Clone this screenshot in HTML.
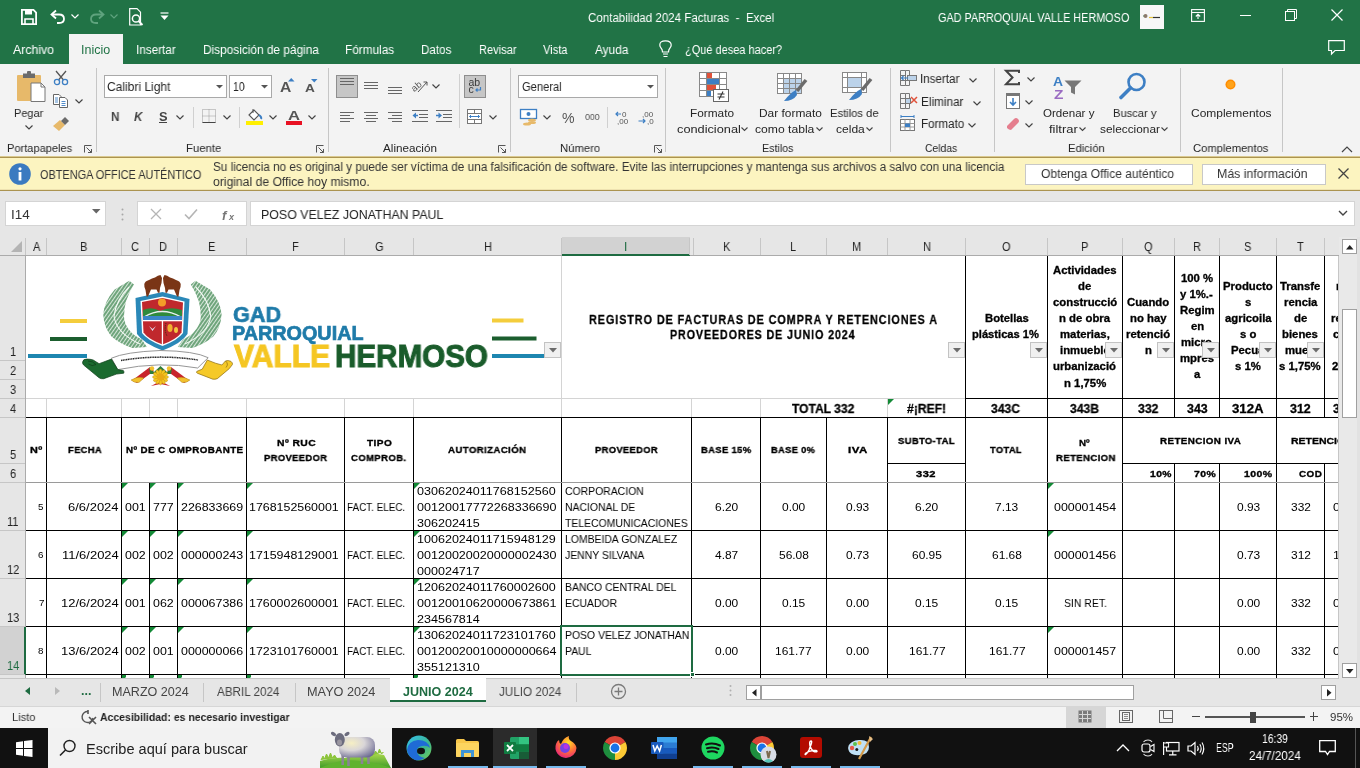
<!DOCTYPE html>
<html><head><meta charset="utf-8">
<style>
*{margin:0;padding:0;box-sizing:border-box}
html,body{width:1360px;height:768px;overflow:hidden;background:#fff;font-family:"Liberation Sans",sans-serif;position:relative}
.a{position:absolute}
.t{position:absolute;white-space:pre;line-height:1;transform-origin:0 0;will-change:transform}
svg{position:absolute;overflow:visible}

</style></head><body>
<div class="a" style="left:0px;top:0px;width:1360px;height:64px;background:#217346"></div>
<div class="a" style="left:0px;top:64px;width:1360px;height:93px;background:#f3f3f3"></div>
<div class="t" style="left:587.60px;top:12.38px;font-size:12.5px;color:#fff;transform:scaleX(0.9237);">Contabilidad 2024 Facturas  -  Excel</div>
<div class="t" style="left:938.00px;top:12.38px;font-size:12.5px;color:#fff;transform:scaleX(0.8672);">GAD PARROQUIAL VALLE HERMOSO</div>
<div class="a" style="left:69px;top:34px;width:54px;height:30px;background:#f3f3f3"></div>
<div class="t" style="left:13.00px;top:44.38px;font-size:12.5px;color:#fff;transform:scaleX(0.9825);">Archivo</div>
<div class="t" style="left:80.51px;top:44.38px;font-size:12.5px;color:#217346;transform:scaleX(0.9883);">Inicio</div>
<div class="t" style="left:136.46px;top:44.38px;font-size:12.5px;color:#fff;transform:scaleX(0.9366);">Insertar</div>
<div class="t" style="left:202.55px;top:44.38px;font-size:12.5px;color:#fff;transform:scaleX(0.9477);">Disposición de página</div>
<div class="t" style="left:345.06px;top:44.38px;font-size:12.5px;color:#fff;transform:scaleX(0.9441);">Fórmulas</div>
<div class="t" style="left:421.47px;top:44.38px;font-size:12.5px;color:#fff;transform:scaleX(0.9266);">Datos</div>
<div class="t" style="left:478.51px;top:44.38px;font-size:12.5px;color:#fff;transform:scaleX(0.8858);">Revisar</div>
<div class="t" style="left:543.00px;top:44.38px;font-size:12.5px;color:#fff;transform:scaleX(0.8909);">Vista</div>
<div class="t" style="left:595.00px;top:44.38px;font-size:12.5px;color:#fff;transform:scaleX(0.9499);">Ayuda</div>
<div class="t" style="left:685.30px;top:44.38px;font-size:12.5px;color:#fff;transform:scaleX(0.8785);">¿Qué desea hacer?</div>
<div class="t" style="left:6.60px;top:143.22px;font-size:11.5px;color:#262626;transform:scaleX(0.9615);">Portapapeles</div>
<div class="t" style="left:185.60px;top:143.22px;font-size:11.5px;color:#262626;transform:scaleX(0.9857);">Fuente</div>
<div class="t" style="left:383.00px;top:143.22px;font-size:11.5px;color:#262626;transform:scaleX(1.0158);">Alineación</div>
<div class="t" style="left:559.50px;top:143.22px;font-size:11.5px;color:#262626;transform:scaleX(0.9826);">Número</div>
<div class="t" style="left:761.50px;top:143.22px;font-size:11.5px;color:#262626;transform:scaleX(0.9290);">Estilos</div>
<div class="t" style="left:924.80px;top:143.22px;font-size:11.5px;color:#262626;transform:scaleX(0.8988);">Celdas</div>
<div class="t" style="left:1067.60px;top:143.22px;font-size:11.5px;color:#262626;transform:scaleX(0.9753);">Edición</div>
<div class="t" style="left:1192.60px;top:143.22px;font-size:11.5px;color:#262626;transform:scaleX(0.9757);">Complementos</div>
<div class="a" style="left:96px;top:68px;width:1px;height:84px;background:#c6c6c6"></div>
<div class="a" style="left:328px;top:68px;width:1px;height:84px;background:#c6c6c6"></div>
<div class="a" style="left:510px;top:68px;width:1px;height:84px;background:#c6c6c6"></div>
<div class="a" style="left:665px;top:68px;width:1px;height:84px;background:#c6c6c6"></div>
<div class="a" style="left:890px;top:68px;width:1px;height:84px;background:#c6c6c6"></div>
<div class="a" style="left:994px;top:68px;width:1px;height:84px;background:#c6c6c6"></div>
<div class="a" style="left:1180px;top:68px;width:1px;height:84px;background:#c6c6c6"></div>
<div class="a" style="left:1282px;top:68px;width:1px;height:84px;background:#c6c6c6"></div>
<div class="a" style="left:0px;top:156px;width:1360px;height:35px;background:#fcf4c0;border-top:1px solid #d9c98f;border-bottom:1px solid #ddd0a0"></div>
<div class="a" style="left:0px;top:157px;width:1360px;height:1px;background:#ab9350"></div>
<div class="a" style="left:0px;top:190px;width:1360px;height:1px;background:#ab9350"></div>
<div class="a" style="left:0px;top:189px;width:1360px;height:1px;background:#eee2b0"></div>
<div class="a" style="left:0px;top:191px;width:1360px;height:46px;background:#e6e6e6"></div>
<div class="a" style="left:0px;top:237px;width:1339px;height:19px;background:#e6e6e6"></div>
<div class="a" style="left:0px;top:255px;width:1339px;height:1px;background:#ababab"></div>
<div class="a" style="left:562px;top:237px;width:128px;height:18px;background:#d2d2d2"></div>
<div class="a" style="left:562px;top:254px;width:128px;height:2px;background:#1e6b41"></div>
<div class="a" style="left:0px;top:256px;width:25px;height:422px;background:#e6e6e6"></div>
<div class="a" style="left:25px;top:256px;width:1px;height:422px;background:#ababab"></div>
<div class="a" style="left:0px;top:627px;width:25px;height:48px;background:#d2d2d2"></div>
<div class="a" style="left:24px;top:627px;width:2px;height:48px;background:#1e6b41"></div>
<div class="a" style="left:46px;top:238px;width:1px;height:17px;background:#c6c6c6"></div>
<div class="a" style="left:121px;top:238px;width:1px;height:17px;background:#c6c6c6"></div>
<div class="a" style="left:149px;top:238px;width:1px;height:17px;background:#c6c6c6"></div>
<div class="a" style="left:177px;top:238px;width:1px;height:17px;background:#c6c6c6"></div>
<div class="a" style="left:246px;top:238px;width:1px;height:17px;background:#c6c6c6"></div>
<div class="a" style="left:344px;top:238px;width:1px;height:17px;background:#c6c6c6"></div>
<div class="a" style="left:413px;top:238px;width:1px;height:17px;background:#c6c6c6"></div>
<div class="a" style="left:561px;top:238px;width:1px;height:17px;background:#c6c6c6"></div>
<div class="a" style="left:689px;top:238px;width:1px;height:17px;background:#c6c6c6"></div>
<div class="a" style="left:693px;top:238px;width:1px;height:17px;background:#c6c6c6"></div>
<div class="a" style="left:760px;top:238px;width:1px;height:17px;background:#c6c6c6"></div>
<div class="a" style="left:826px;top:238px;width:1px;height:17px;background:#c6c6c6"></div>
<div class="a" style="left:887px;top:238px;width:1px;height:17px;background:#c6c6c6"></div>
<div class="a" style="left:965px;top:238px;width:1px;height:17px;background:#c6c6c6"></div>
<div class="a" style="left:1047px;top:238px;width:1px;height:17px;background:#c6c6c6"></div>
<div class="a" style="left:1122px;top:238px;width:1px;height:17px;background:#c6c6c6"></div>
<div class="a" style="left:1174px;top:238px;width:1px;height:17px;background:#c6c6c6"></div>
<div class="a" style="left:1219px;top:238px;width:1px;height:17px;background:#c6c6c6"></div>
<div class="a" style="left:1276px;top:238px;width:1px;height:17px;background:#c6c6c6"></div>
<div class="a" style="left:1324px;top:238px;width:1px;height:17px;background:#c6c6c6"></div>
<div class="a" style="left:25px;top:238px;width:1px;height:17px;background:#c6c6c6"></div>
<svg style="left:11px;top:241px" width="12" height="12"><path d="M11 0 L11 11 L0 11 Z" fill="#b4b4b4"/></svg>
<div class="t" style="left:32.82px;top:240.80px;font-size:12px;color:#222;transform:scaleX(0.9200);">A</div>
<div class="t" style="left:80.32px;top:240.80px;font-size:12px;color:#222;transform:scaleX(0.9200);">B</div>
<div class="t" style="left:131.36px;top:240.80px;font-size:12px;color:#222;transform:scaleX(0.9200);">C</div>
<div class="t" style="left:159.36px;top:240.80px;font-size:12px;color:#222;transform:scaleX(0.9200);">D</div>
<div class="t" style="left:208.32px;top:240.80px;font-size:12px;color:#222;transform:scaleX(0.9200);">E</div>
<div class="t" style="left:292.28px;top:240.80px;font-size:12px;color:#222;transform:scaleX(0.9200);">F</div>
<div class="t" style="left:374.86px;top:240.80px;font-size:12px;color:#222;transform:scaleX(0.9200);">G</div>
<div class="t" style="left:483.82px;top:240.80px;font-size:12px;color:#222;transform:scaleX(0.9200);">H</div>
<div class="t" style="left:623.66px;top:240.80px;font-size:12px;color:#1e6b41;transform:scaleX(0.9200);">I</div>
<div class="t" style="left:723.32px;top:240.80px;font-size:12px;color:#222;transform:scaleX(0.9200);">K</div>
<div class="t" style="left:790.28px;top:240.80px;font-size:12px;color:#222;transform:scaleX(0.9200);">L</div>
<div class="t" style="left:852.40px;top:240.80px;font-size:12px;color:#222;transform:scaleX(0.9200);">M</div>
<div class="t" style="left:922.82px;top:240.80px;font-size:12px;color:#222;transform:scaleX(0.9200);">N</div>
<div class="t" style="left:1002.36px;top:240.80px;font-size:12px;color:#222;transform:scaleX(0.9200);">O</div>
<div class="t" style="left:1081.32px;top:240.80px;font-size:12px;color:#222;transform:scaleX(0.9200);">P</div>
<div class="t" style="left:1144.36px;top:240.80px;font-size:12px;color:#222;transform:scaleX(0.9200);">Q</div>
<div class="t" style="left:1192.86px;top:240.80px;font-size:12px;color:#222;transform:scaleX(0.9200);">R</div>
<div class="t" style="left:1244.32px;top:240.80px;font-size:12px;color:#222;transform:scaleX(0.9200);">S</div>
<div class="t" style="left:1296.82px;top:240.80px;font-size:12px;color:#222;transform:scaleX(0.9200);">T</div>
<div class="a" style="left:0px;top:360px;width:25px;height:1px;background:#c6c6c6"></div>
<div class="t" style="left:9.78px;top:345.80px;font-size:12px;color:#222;transform:scaleX(0.9200);">1</div>
<div class="a" style="left:0px;top:379px;width:25px;height:1px;background:#c6c6c6"></div>
<div class="t" style="left:9.78px;top:364.80px;font-size:12px;color:#222;transform:scaleX(0.9200);">2</div>
<div class="a" style="left:0px;top:398px;width:25px;height:1px;background:#c6c6c6"></div>
<div class="t" style="left:9.78px;top:383.80px;font-size:12px;color:#222;transform:scaleX(0.9200);">3</div>
<div class="a" style="left:0px;top:417px;width:25px;height:1px;background:#c6c6c6"></div>
<div class="t" style="left:9.78px;top:402.80px;font-size:12px;color:#222;transform:scaleX(0.9200);">4</div>
<div class="a" style="left:0px;top:463px;width:25px;height:1px;background:#c6c6c6"></div>
<div class="t" style="left:9.78px;top:448.80px;font-size:12px;color:#222;transform:scaleX(0.9200);">5</div>
<div class="a" style="left:0px;top:482px;width:25px;height:1px;background:#c6c6c6"></div>
<div class="t" style="left:9.78px;top:467.80px;font-size:12px;color:#222;transform:scaleX(0.9200);">6</div>
<div class="a" style="left:0px;top:530px;width:25px;height:1px;background:#c6c6c6"></div>
<div class="t" style="left:7.12px;top:515.80px;font-size:12px;color:#222;transform:scaleX(0.9200);">11</div>
<div class="a" style="left:0px;top:578px;width:25px;height:1px;background:#c6c6c6"></div>
<div class="t" style="left:6.71px;top:563.80px;font-size:12px;color:#222;transform:scaleX(0.9200);">12</div>
<div class="a" style="left:0px;top:626px;width:25px;height:1px;background:#c6c6c6"></div>
<div class="t" style="left:6.71px;top:611.80px;font-size:12px;color:#222;transform:scaleX(0.9200);">13</div>
<div class="a" style="left:0px;top:674px;width:25px;height:1px;background:#c6c6c6"></div>
<div class="t" style="left:6.71px;top:659.80px;font-size:12px;color:#1e6b41;transform:scaleX(0.9200);">14</div>
<div class="a" style="left:561px;top:256px;width:1px;height:143px;background:#d4d4d4"></div>
<div class="a" style="left:26px;top:398px;width:940px;height:1px;background:#d4d4d4"></div>
<div class="a" style="left:46px;top:398px;width:1px;height:20px;background:#d4d4d4"></div>
<div class="a" style="left:121px;top:398px;width:1px;height:20px;background:#d4d4d4"></div>
<div class="a" style="left:149px;top:398px;width:1px;height:20px;background:#d4d4d4"></div>
<div class="a" style="left:177px;top:398px;width:1px;height:20px;background:#d4d4d4"></div>
<div class="a" style="left:246px;top:398px;width:1px;height:20px;background:#d4d4d4"></div>
<div class="a" style="left:344px;top:398px;width:1px;height:20px;background:#d4d4d4"></div>
<div class="a" style="left:413px;top:398px;width:1px;height:20px;background:#d4d4d4"></div>
<div class="a" style="left:561px;top:398px;width:1px;height:20px;background:#d4d4d4"></div>
<div class="a" style="left:691px;top:398px;width:1px;height:20px;background:#d4d4d4"></div>
<div class="a" style="left:760px;top:398px;width:1px;height:20px;background:#d4d4d4"></div>
<div class="a" style="left:887px;top:398px;width:1px;height:20px;background:#d4d4d4"></div>
<div class="a" style="left:965px;top:398px;width:374px;height:1px;background:#000"></div>
<div class="a" style="left:26px;top:417px;width:1313px;height:1px;background:#000"></div>
<div class="a" style="left:46px;top:417px;width:1px;height:66px;background:#000"></div>
<div class="a" style="left:121px;top:417px;width:1px;height:66px;background:#000"></div>
<div class="a" style="left:246px;top:417px;width:1px;height:66px;background:#000"></div>
<div class="a" style="left:344px;top:417px;width:1px;height:66px;background:#000"></div>
<div class="a" style="left:413px;top:417px;width:1px;height:66px;background:#000"></div>
<div class="a" style="left:561px;top:417px;width:1px;height:66px;background:#000"></div>
<div class="a" style="left:691px;top:417px;width:1px;height:66px;background:#000"></div>
<div class="a" style="left:760px;top:417px;width:1px;height:66px;background:#000"></div>
<div class="a" style="left:826px;top:417px;width:1px;height:66px;background:#000"></div>
<div class="a" style="left:887px;top:417px;width:1px;height:66px;background:#000"></div>
<div class="a" style="left:965px;top:256px;width:1px;height:422px;background:#000"></div>
<div class="a" style="left:1047px;top:256px;width:1px;height:422px;background:#000"></div>
<div class="a" style="left:1122px;top:256px;width:1px;height:422px;background:#000"></div>
<div class="a" style="left:1276px;top:256px;width:1px;height:422px;background:#000"></div>
<div class="a" style="left:1174px;top:256px;width:1px;height:162px;background:#000"></div>
<div class="a" style="left:1174px;top:463px;width:1px;height:215px;background:#000"></div>
<div class="a" style="left:1219px;top:256px;width:1px;height:162px;background:#000"></div>
<div class="a" style="left:1219px;top:463px;width:1px;height:215px;background:#000"></div>
<div class="a" style="left:1324px;top:256px;width:1px;height:162px;background:#000"></div>
<div class="a" style="left:1324px;top:463px;width:1px;height:215px;background:#000"></div>
<div class="a" style="left:887px;top:463px;width:79px;height:1px;background:#000"></div>
<div class="a" style="left:1122px;top:463px;width:217px;height:1px;background:#000"></div>
<div class="a" style="left:26px;top:482px;width:1313px;height:1px;background:#9a9a9a"></div>
<div class="a" style="left:26px;top:530px;width:1313px;height:1px;background:#000"></div>
<div class="a" style="left:26px;top:578px;width:1313px;height:1px;background:#000"></div>
<div class="a" style="left:26px;top:626px;width:1313px;height:1px;background:#000"></div>
<div class="a" style="left:26px;top:674px;width:1313px;height:1px;background:#000"></div>
<div class="a" style="left:46px;top:483px;width:1px;height:195px;background:#000"></div>
<div class="a" style="left:121px;top:483px;width:1px;height:195px;background:#000"></div>
<div class="a" style="left:149px;top:483px;width:1px;height:195px;background:#000"></div>
<div class="a" style="left:177px;top:483px;width:1px;height:195px;background:#000"></div>
<div class="a" style="left:246px;top:483px;width:1px;height:195px;background:#000"></div>
<div class="a" style="left:344px;top:483px;width:1px;height:195px;background:#000"></div>
<div class="a" style="left:413px;top:483px;width:1px;height:195px;background:#000"></div>
<div class="a" style="left:561px;top:483px;width:1px;height:195px;background:#000"></div>
<div class="a" style="left:691px;top:483px;width:1px;height:195px;background:#000"></div>
<div class="a" style="left:760px;top:483px;width:1px;height:195px;background:#000"></div>
<div class="a" style="left:826px;top:483px;width:1px;height:195px;background:#000"></div>
<div class="a" style="left:887px;top:483px;width:1px;height:195px;background:#000"></div>
<div class="a" style="left:1338px;top:256px;width:1px;height:422px;background:#c6c6c6"></div>
<div class="a" style="left:1339px;top:237px;width:21px;height:441px;background:#e9e9e9"></div>
<div class="a" style="left:1357px;top:237px;width:3px;height:441px;background:#e2e2e2"></div>
<div class="a" style="left:1342px;top:239px;width:15px;height:15px;background:#fff;border:1px solid #a0a0a0"><svg style="left:3px;top:5px" width="8" height="5"><path d="M0 4.5H7.5L3.75 0Z" fill="#222"/></svg></div>
<div class="a" style="left:1342px;top:309px;width:15px;height:109px;background:#fff;border:1px solid #a0a0a0"></div>
<div class="a" style="left:1342px;top:663px;width:15px;height:15px;background:#fff;border:1px solid #a0a0a0"><svg style="left:3px;top:5px" width="8" height="5"><path d="M0 0H7.5L3.75 4.5Z" fill="#222"/></svg></div>
<svg style="left:17px;top:71px" width="30" height="32" viewBox="0 0 30 32">
<rect x="0" y="4" width="24" height="26" rx="1" fill="#e7b96a"/>
<path d="M6 2.5 H18 V7 H6Z" fill="#6b6b6b"/><rect x="10" y="0" width="4" height="3.5" rx="1" fill="#6b6b6b"/>
<path d="M14 12 H24 L28 16 V30.5 H14Z" fill="#fff" stroke="#777" stroke-width="1"/>
<path d="M24 12 V16 H28" fill="none" stroke="#777" stroke-width="1"/>
</svg>
<div class="t" style="left:14.40px;top:108.22px;font-size:11.5px;color:#262626;transform:scaleX(0.9528);">Pegar</div>
<svg style="left:25px;top:125px" width="8" height="5"><path d="M0.5 0.5L4 4L7.5 0.5" stroke="#444" stroke-width="1.2" fill="none"/></svg>
<svg style="left:53px;top:70px" width="16" height="15"><path d="M3 1L10.5 10M13 1L5.5 10" stroke="#555" stroke-width="1.3"/><circle cx="4" cy="12" r="2.6" fill="none" stroke="#3d7fc4" stroke-width="1.3"/><circle cx="12" cy="12" r="2.6" fill="none" stroke="#3d7fc4" stroke-width="1.3"/></svg>
<svg style="left:53px;top:94px" width="16" height="14"><path d="M0.5 0.5H6L8 2.5V10.5H0.5Z" fill="#fff" stroke="#666"/><path d="M6.5 3.5H12L14.5 6V13.5H6.5Z" fill="#fff" stroke="#666"/><path d="M8.5 7.5H12.5M8.5 9.5H12.5M8.5 11.5H12.5M2 4H5M2 6H5M2 8H5" stroke="#3d7fc4" stroke-width="0.9"/></svg>
<svg style="left:75px;top:99px" width="8" height="5"><path d="M0.5 0.5L4 4L7.5 0.5" stroke="#444" stroke-width="1.2" fill="none"/></svg>
<svg style="left:53px;top:117px" width="16" height="14"><path d="M0 9 L7 3 L12 8 L6 14Z" fill="#e7b96a"/><path d="M8 4 L12 0 L16 4 L12 8Z" fill="#6b6b6b"/></svg>
<svg style="left:84px;top:145px" width="9" height="8"><path d="M0.5 7.5V0.5H7.5" stroke="#555" fill="none"/><path d="M2.5 2.5L7.5 7.5M4 7.5H7.5V4" stroke="#555" fill="none"/></svg>
<div class="a" style="left:104px;top:75px;width:123px;height:23px;background:#fff;border:1px solid #a9a9a9"></div>
<div class="t" style="left:107.40px;top:81.38px;font-size:12.5px;color:#262626;transform:scaleX(0.9605);">Calibri Light</div>
<svg style="left:216px;top:85px" width="8" height="4"><path d="M0 0H7L3.5 3.5Z" fill="#555"/></svg>
<div class="a" style="left:229px;top:75px;width:43px;height:23px;background:#fff;border:1px solid #a9a9a9"></div>
<div class="t" style="left:232.70px;top:81.38px;font-size:12.5px;color:#262626;transform:scaleX(0.8314);">10</div>
<svg style="left:261px;top:85px" width="8" height="4"><path d="M0 0H7L3.5 3.5Z" fill="#555"/></svg>
<div class="t" style="left:280.30px;top:80.10px;font-size:14px;color:#555;font-weight:bold;transform:scaleX(1.1200);">A</div>
<svg style="left:288px;top:78px" width="7" height="4"><path d="M0 3.5H6.5L3.25 0Z" fill="#3d7fc4"/></svg>
<div class="t" style="left:305.00px;top:83.22px;font-size:11.5px;color:#555;font-weight:bold;transform:scaleX(1.1875);">A</div>
<svg style="left:311px;top:79px" width="7" height="4"><path d="M0 0H6.5L3.25 3.5Z" fill="#3d7fc4"/></svg>
<div class="t" style="left:110.60px;top:111.38px;font-size:12.5px;color:#444;font-weight:bold;transform:scaleX(0.9333);">N</div>
<div class="t" style="left:134.00px;top:111.38px;font-size:12.5px;color:#444;font-weight:bold;transform:scaleX(0.9333);font-style:italic;">K</div>
<div class="t" style="left:158.80px;top:111.38px;font-size:12.5px;color:#444;font-weight:bold;transform:scaleX(1.0250);">S</div>
<div class="a" style="left:159px;top:122px;width:8px;height:1px;background:#444"></div>
<svg style="left:176px;top:115px" width="8" height="5"><path d="M0.5 0.5L4 4L7.5 0.5" stroke="#444" stroke-width="1.2" fill="none"/></svg>
<div class="a" style="left:193px;top:107px;width:1px;height:21px;background:#d0d0d0"></div>
<svg style="left:202px;top:109px" width="14" height="14"><rect x="0.5" y="0.5" width="13" height="13" fill="none" stroke="#999" stroke-dasharray="1 1"/><path d="M7 0.5V13.5M0.5 7H13.5" stroke="#999" stroke-dasharray="1 1"/><path d="M0.5 13.5H13.5" stroke="#444"/></svg>
<svg style="left:223px;top:115px" width="8" height="5"><path d="M0.5 0.5L4 4L7.5 0.5" stroke="#444" stroke-width="1.2" fill="none"/></svg>
<div class="a" style="left:239px;top:107px;width:1px;height:21px;background:#d0d0d0"></div>
<svg style="left:246px;top:108px" width="18" height="18"><path d="M3 7 L8 2 L13 7 L8 12Z" fill="#fff" stroke="#555" stroke-width="1.1"/><path d="M7 1V5" stroke="#555"/><path d="M13 7 Q16 9 15 11" stroke="#3d7fc4" stroke-width="2" fill="none"/><rect x="0" y="13" width="17" height="4" fill="#ffef00"/></svg>
<svg style="left:269px;top:115px" width="8" height="5"><path d="M0.5 0.5L4 4L7.5 0.5" stroke="#444" stroke-width="1.2" fill="none"/></svg>
<div class="t" style="left:288.00px;top:110.38px;font-size:12.5px;color:#555;font-weight:bold;transform:scaleX(1.3333);">A</div>
<div class="a" style="left:286px;top:121px;width:16px;height:4px;background:#e81123"></div>
<svg style="left:308px;top:115px" width="8" height="5"><path d="M0.5 0.5L4 4L7.5 0.5" stroke="#444" stroke-width="1.2" fill="none"/></svg>
<svg style="left:316px;top:145px" width="9" height="8"><path d="M0.5 7.5V0.5H7.5" stroke="#555" fill="none"/><path d="M2.5 2.5L7.5 7.5M4 7.5H7.5V4" stroke="#555" fill="none"/></svg>
<div class="a" style="left:336px;top:75px;width:22px;height:23px;background:#c6c6c6;border:1px solid #8e8e8e"></div>
<svg style="left:340px;top:78px" width="14" height="8"><path d="M0 0.5H14M0 3.5H14M0 6.5H14" stroke="#666" stroke-width="1"/></svg>
<svg style="left:364px;top:82px" width="14" height="8"><path d="M0 0.5H14M0 3.5H14M0 6.5H14" stroke="#666" stroke-width="1"/></svg>
<svg style="left:388px;top:87px" width="14" height="8"><path d="M0 0.5H14M0 3.5H14M0 6.5H14" stroke="#666" stroke-width="1"/></svg>
<svg style="left:411px;top:78px" width="18" height="15"><text x="0" y="11" font-family="Liberation Sans" font-size="9.5" fill="#555" transform="rotate(-40 6 8)">ab</text><path d="M7 14L16 4M16 4H12.5M16 4V7.5" stroke="#555" stroke-width="1" fill="none"/></svg>
<svg style="left:432px;top:84px" width="8" height="5"><path d="M0.5 0.5L4 4L7.5 0.5" stroke="#444" stroke-width="1.2" fill="none"/></svg>
<svg style="left:340px;top:112px" width="14" height="10"><path d="M0 0.5H14M0 3.5H10M0 6.5H14M0 9.5H10" stroke="#666" stroke-width="1"/></svg>
<svg style="left:364px;top:112px" width="14" height="10"><path d="M0 0.5H14M2 3.5H12M0 6.5H14M2 9.5H12" stroke="#666" stroke-width="1"/></svg>
<svg style="left:388px;top:112px" width="14" height="10"><path d="M0 0.5H14M4 3.5H14M0 6.5H14M4 9.5H14" stroke="#666" stroke-width="1"/></svg>
<svg style="left:412px;top:110px" width="17" height="13"><path d="M0 0.5H16M7 4.5H16M7 7.5H16M0 11.5H16" stroke="#666" stroke-width="1"/><path d="M0.5 5.5L4 2.5V8.5Z" fill="#3d7fc4"/><path d="M3 5.5H6" stroke="#3d7fc4" stroke-width="1.5"/></svg>
<svg style="left:436px;top:110px" width="17" height="13"><path d="M0 0.5H16M7 4.5H16M7 7.5H16M0 11.5H16" stroke="#666" stroke-width="1"/><path d="M6 5.5L2.5 2.5V8.5Z" fill="#3d7fc4"/><path d="M0 5.5H3" stroke="#3d7fc4" stroke-width="1.5"/></svg>
<div class="a" style="left:459px;top:74px;width:1px;height:54px;background:#d0d0d0"></div>
<div class="a" style="left:464px;top:75px;width:22px;height:23px;background:#c6c6c6;border:1px solid #8e8e8e"></div>
<svg style="left:467px;top:77px" width="17" height="18"><text x="1.5" y="8.5" font-family="Liberation Sans" font-size="10.5" fill="#3a3a3a">ab</text><text x="1.5" y="16" font-family="Liberation Sans" font-size="10.5" fill="#3a3a3a">c</text><path d="M13.5 10V13H9M10.5 11.5L9 13L10.5 14.5" stroke="#3d7fc4" stroke-width="1.2" fill="none"/></svg>
<svg style="left:467px;top:109px" width="15" height="15"><rect x="0.5" y="0.5" width="14" height="14" fill="#fff" stroke="#777"/><path d="M0.5 4.5H14.5M0.5 10.5H14.5M7.5 0.5V4.5M7.5 10.5V14.5" stroke="#777"/><path d="M2.5 7.5H12.5M4 6L2.5 7.5L4 9M11 6L12.5 7.5L11 9" stroke="#3d7fc4" fill="none"/></svg>
<svg style="left:489px;top:115px" width="8" height="5"><path d="M0.5 0.5L4 4L7.5 0.5" stroke="#444" stroke-width="1.2" fill="none"/></svg>
<svg style="left:498px;top:145px" width="9" height="8"><path d="M0.5 7.5V0.5H7.5" stroke="#555" fill="none"/><path d="M2.5 2.5L7.5 7.5M4 7.5H7.5V4" stroke="#555" fill="none"/></svg>
<div class="a" style="left:518px;top:75px;width:140px;height:23px;background:#fff;border:1px solid #a9a9a9"></div>
<div class="t" style="left:521.50px;top:80.80px;font-size:12px;color:#262626;transform:scaleX(0.9304);">General</div>
<svg style="left:647px;top:85px" width="8" height="4"><path d="M0 0H7L3.5 3.5Z" fill="#555"/></svg>
<svg style="left:520px;top:109px" width="18" height="17"><rect x="0.5" y="0.5" width="16" height="9" fill="#fff" stroke="#3d7fc4" stroke-width="1.3"/><circle cx="8.5" cy="5" r="2" fill="#3d7fc4"/><ellipse cx="12" cy="11" rx="4" ry="1.6" fill="#e7b96a"/><ellipse cx="12" cy="13.5" rx="4" ry="1.6" fill="#e7b96a"/><ellipse cx="7" cy="15" rx="4" ry="1.6" fill="#e7b96a"/></svg>
<svg style="left:543px;top:115px" width="8" height="5"><path d="M0.5 0.5L4 4L7.5 0.5" stroke="#444" stroke-width="1.2" fill="none"/></svg>
<div class="t" style="left:562.30px;top:111.10px;font-size:14px;color:#555;transform:scaleX(1.0083);">%</div>
<div class="t" style="left:584.60px;top:111.92px;font-size:9.5px;color:#555;transform:scaleX(0.9250);">000</div>
<div class="a" style="left:607px;top:107px;width:1px;height:21px;background:#d0d0d0"></div>
<svg style="left:615px;top:110px" width="15" height="14"><text x="7" y="7" font-family="Liberation Sans" font-size="8" fill="#555">0</text><text x="2" y="13.5" font-family="Liberation Sans" font-size="8" fill="#555">,00</text><path d="M1 4H6M3 2L1 4L3 6" stroke="#3d7fc4" stroke-width="1.2" fill="none"/></svg>
<svg style="left:638px;top:110px" width="16" height="14"><text x="4" y="7" font-family="Liberation Sans" font-size="8" fill="#555">,00</text><text x="9" y="13.5" font-family="Liberation Sans" font-size="8" fill="#555">,0</text><path d="M0.5 11H7M5 9L7 11L5 13" stroke="#3d7fc4" stroke-width="1.2" fill="none"/></svg>
<svg style="left:654px;top:145px" width="9" height="8"><path d="M0.5 7.5V0.5H7.5" stroke="#555" fill="none"/><path d="M2.5 2.5L7.5 7.5M4 7.5H7.5V4" stroke="#555" fill="none"/></svg>
<svg style="left:699px;top:72px" width="30" height="30" viewBox="0 0 30 30">
<rect x="0.5" y="0.5" width="27" height="24" fill="#fff" stroke="#888"/>
<path d="M0.5 6.5H27.5M0.5 12.5H27.5M0.5 18.5H27.5M7.5 0.5V24.5M20.5 0.5V24.5" stroke="#888"/>
<rect x="8" y="1" width="5" height="5" fill="#e0523a"/><rect x="8" y="7" width="12" height="5" fill="#3d7fc4"/><rect x="8" y="13" width="9" height="5" fill="#e0523a"/><rect x="8" y="19" width="4" height="5" fill="#3d7fc4"/>
<rect x="14.5" y="17.5" width="15" height="12" fill="#fff" stroke="#666"/>
<path d="M18.5 22H25.5M18.5 25H25.5M24 19.5L20 27.5" stroke="#333" stroke-width="1.1"/>
</svg>
<div class="t" style="left:690.40px;top:108.22px;font-size:11.5px;color:#262626;transform:scaleX(1.0278);">Formato</div>
<div class="t" style="left:676.80px;top:124.22px;font-size:11.5px;color:#262626;transform:scaleX(1.1091);">condicional</div>
<svg style="left:741px;top:127px" width="7" height="4"><path d="M0.5 0.5L3.5 3.5L6.5 0.5" stroke="#444" stroke-width="1.1" fill="none"/></svg>
<svg style="left:777px;top:73px" width="30" height="29" viewBox="0 0 30 29">
<rect x="0.5" y="0.5" width="24" height="20" fill="#fff" stroke="#888"/>
<rect x="6" y="5" width="18" height="15" fill="#bcd3ea"/>
<path d="M0.5 5.5H24.5M0.5 10.5H24.5M0.5 15.5H24.5M6.5 0.5V20.5M12.5 0.5V20.5M18.5 0.5V20.5" stroke="#888"/>
<path d="M29 7 L20 18" stroke="#6b6b6b" stroke-width="3.5"/>
<path d="M19 17 Q13 20 7 28 Q16 28 20 22 Z" fill="#3d7fc4"/>
</svg>
<div class="t" style="left:758.50px;top:108.22px;font-size:11.5px;color:#262626;transform:scaleX(1.0362);">Dar formato</div>
<div class="t" style="left:755.00px;top:124.22px;font-size:11.5px;color:#262626;transform:scaleX(1.0553);">como tabla</div>
<svg style="left:816px;top:127px" width="7" height="4"><path d="M0.5 0.5L3.5 3.5L6.5 0.5" stroke="#444" stroke-width="1.1" fill="none"/></svg>
<svg style="left:842px;top:72px" width="30" height="30" viewBox="0 0 30 30">
<rect x="0.5" y="0.5" width="24" height="20" fill="#fff" stroke="#888"/>
<rect x="5.5" y="5.5" width="14" height="10" fill="#bcd3ea" stroke="#888"/>
<path d="M0.5 5.5H24.5M0.5 15.5H24.5M5.5 0.5V20.5M19.5 0.5V20.5" stroke="#888"/>
<path d="M29 7 L20 18" stroke="#6b6b6b" stroke-width="3.5"/>
<path d="M19 17 Q13 20 7 28 Q16 28 20 22 Z" fill="#3d7fc4"/>
</svg>
<div class="t" style="left:830.30px;top:108.22px;font-size:11.5px;color:#262626;transform:scaleX(0.9745);">Estilos de</div>
<div class="t" style="left:835.60px;top:124.22px;font-size:11.5px;color:#262626;transform:scaleX(1.0464);">celda</div>
<svg style="left:866px;top:127px" width="7" height="4"><path d="M0.5 0.5L3.5 3.5L6.5 0.5" stroke="#444" stroke-width="1.1" fill="none"/></svg>
<svg style="left:900px;top:70px" width="18" height="16"><path d="M0.5 0.5H5.5V15.5H0.5ZM0.5 5.5H5.5M0.5 10.5H5.5M5.5 0.5H9.5V5.5M5.5 10.5H9.5V15.5H5.5" fill="none" stroke="#777"/><rect x="7.5" y="5.5" width="9" height="5" fill="#bcd3ea" stroke="#777"/><path d="M1.5 8H8M3.5 6L1.5 8L3.5 10" stroke="#3d7fc4" stroke-width="1.2" fill="none"/></svg>
<div class="t" style="left:919.53px;top:72.80px;font-size:12px;color:#262626;transform:scaleX(0.9651);">Insertar</div>
<svg style="left:969px;top:78px" width="8" height="5"><path d="M0.5 0.5L4 4L7.5 0.5" stroke="#444" stroke-width="1.2" fill="none"/></svg>
<svg style="left:900px;top:93px" width="18" height="16"><path d="M0.5 0.5H5.5V15.5H0.5ZM0.5 5.5H5.5M0.5 10.5H5.5M5.5 0.5H9.5V5.5M5.5 10.5H9.5V15.5H5.5" fill="none" stroke="#777"/><rect x="5.5" y="5.5" width="5" height="5" fill="#bcd3ea" stroke="#777"/><path d="M11 4L17 10M17 4L11 10" stroke="#e0523a" stroke-width="1.5"/></svg>
<div class="t" style="left:920.50px;top:95.80px;font-size:12px;color:#262626;transform:scaleX(0.9805);">Eliminar</div>
<svg style="left:973px;top:101px" width="8" height="5"><path d="M0.5 0.5L4 4L7.5 0.5" stroke="#444" stroke-width="1.2" fill="none"/></svg>
<svg style="left:900px;top:115px" width="16" height="17"><path d="M1 1.5H14M1 0V3M14 0V3" stroke="#3d7fc4"/><rect x="0.5" y="4.5" width="14" height="11" fill="#fff" stroke="#777"/><path d="M0.5 8.5H14.5M0.5 12H14.5M5 4.5V15.5M10 4.5V15.5" stroke="#999"/><rect x="5" y="8.5" width="5" height="3.5" fill="#3d7fc4"/></svg>
<div class="t" style="left:920.50px;top:117.80px;font-size:12px;color:#262626;transform:scaleX(0.9666);">Formato</div>
<svg style="left:968px;top:123px" width="8" height="5"><path d="M0.5 0.5L4 4L7.5 0.5" stroke="#444" stroke-width="1.2" fill="none"/></svg>
<svg style="left:1005px;top:70px" width="15" height="15"><path d="M14 3V0.8H1L7.5 7.5L1 14.2H14V12" stroke="#444" stroke-width="2" fill="none"/></svg>
<svg style="left:1027px;top:77px" width="8" height="5"><path d="M0.5 0.5L4 4L7.5 0.5" stroke="#444" stroke-width="1.2" fill="none"/></svg>
<svg style="left:1006px;top:93px" width="14" height="16"><rect x="0.5" y="0.5" width="13" height="15" fill="#fff" stroke="#777"/><rect x="0" y="0" width="14" height="3" fill="#777"/><path d="M7 5V12M4 9L7 12L10 9" stroke="#3d7fc4" stroke-width="1.6" fill="none"/></svg>
<svg style="left:1025px;top:100px" width="8" height="5"><path d="M0.5 0.5L4 4L7.5 0.5" stroke="#444" stroke-width="1.2" fill="none"/></svg>
<svg style="left:1006px;top:117px" width="14" height="13"><path d="M1 9 L8 2 Q10 0 12 2 Q14 4 12 6 L5 13 Q3 13 1 11Z" fill="#e57e8e"/></svg>
<svg style="left:1025px;top:123px" width="8" height="5"><path d="M0.5 0.5L4 4L7.5 0.5" stroke="#444" stroke-width="1.2" fill="none"/></svg>
<div class="t" style="left:1053.30px;top:74.95px;font-size:13px;color:#3d7fc4;font-weight:bold;transform:scaleX(1.0700);">A</div>
<div class="t" style="left:1054.00px;top:88.80px;font-size:12px;color:#9a6cc2;font-weight:bold;transform:scaleX(1.2857);">Z</div>
<svg style="left:1064px;top:80px" width="18" height="15"><path d="M0.5 0.5H17.5L11 7V14.5L7 12.5V7Z" fill="#777"/></svg>
<div class="t" style="left:1042.60px;top:108.22px;font-size:11.5px;color:#262626;transform:scaleX(1.0062);">Ordenar y</div>
<div class="t" style="left:1049.00px;top:124.22px;font-size:11.5px;color:#262626;transform:scaleX(1.1273);">filtrar</div>
<svg style="left:1079px;top:127px" width="7" height="4"><path d="M0.5 0.5L3.5 3.5L6.5 0.5" stroke="#444" stroke-width="1.1" fill="none"/></svg>
<svg style="left:1119px;top:72px" width="28" height="27"><circle cx="17.5" cy="10" r="8" fill="none" stroke="#3d7fc4" stroke-width="2.6"/><path d="M11.5 16 L2 25.5" stroke="#3d7fc4" stroke-width="3.6" stroke-linecap="round"/></svg>
<div class="t" style="left:1112.50px;top:108.22px;font-size:11.5px;color:#262626;transform:scaleX(0.9714);">Buscar y</div>
<div class="t" style="left:1099.90px;top:124.22px;font-size:11.5px;color:#262626;transform:scaleX(1.0302);">seleccionar</div>
<svg style="left:1161px;top:127px" width="7" height="4"><path d="M0.5 0.5L3.5 3.5L6.5 0.5" stroke="#444" stroke-width="1.1" fill="none"/></svg>
<svg style="left:1225px;top:79px" width="11" height="11"><circle cx="5.5" cy="5.5" r="5" fill="#ff8c00"/><circle cx="5.5" cy="5.5" r="3.5" fill="#ffa31a"/></svg>
<div class="t" style="left:1190.60px;top:108.22px;font-size:11.5px;color:#262626;transform:scaleX(1.0414);">Complementos</div>
<svg style="left:1341px;top:146px" width="12" height="7"><path d="M1 6L6 1L11 6" stroke="#444" stroke-width="1.2" fill="none"/></svg>
<svg style="left:21px;top:9px" width="16" height="16"><path d="M0.9 0.9H12.5L15.1 3.5V15.1H0.9Z" fill="none" stroke="#fff" stroke-width="1.8"/><rect x="4" y="1" width="7" height="4.5" fill="#fff"/><path d="M4 15V10H12V15" stroke="#fff" stroke-width="1.6" fill="none"/></svg>
<svg style="left:50px;top:9px" width="16" height="15"><path d="M6 1.5L1.5 5.5L6 9.5" stroke="#fff" stroke-width="1.8" fill="none"/><path d="M2 5.5H9Q14 5.5 14 10Q14 14 9 14H7" stroke="#fff" stroke-width="1.8" fill="none"/></svg>
<svg style="left:71px;top:14px" width="8" height="5"><path d="M0.5 0.5L4 4L7.5 0.5" stroke="#fff" stroke-width="1.2" fill="none"/></svg>
<svg style="left:89px;top:9px" width="16" height="15"><path d="M10 1.5L14.5 5.5L10 9.5" stroke="#5fa37e" stroke-width="1.8" fill="none"/><path d="M14 5.5H7Q2 5.5 2 10Q2 14 7 14H9" stroke="#5fa37e" stroke-width="1.8" fill="none"/></svg>
<svg style="left:110px;top:14px" width="8" height="5"><path d="M0.5 0.5L4 4L7.5 0.5" stroke="#5fa37e" stroke-width="1.2" fill="none"/></svg>
<svg style="left:129px;top:8px" width="16" height="18"><path d="M0.7 0.7H8L11.5 4.2V17H0.7Z" fill="none" stroke="#fff" stroke-width="1.2"/><circle cx="7" cy="10.5" r="3.6" fill="none" stroke="#fff" stroke-width="1.5"/><path d="M9.5 13L13.5 17" stroke="#fff" stroke-width="1.8"/></svg>
<svg style="left:160px;top:12px" width="9" height="9"><path d="M0.5 1H8.5" stroke="#fff" stroke-width="1.2"/><path d="M0.5 3.5H8.5L4.5 8Z" fill="#fff"/></svg>
<div class="a" style="left:1140px;top:5px;width:24px;height:24px;background:#f7f7f7"><svg style="left:2px;top:8px" width="20" height="8"><circle cx="3.5" cy="3" r="2" fill="#8a7a6a"/><path d="M1 3H2" stroke="#5a8a6a"/><path d="M7 4.5H11" stroke="#e2c23b" stroke-width="1.2"/><path d="M11 4.5H18" stroke="#333" stroke-width="1.2"/></svg></div>
<svg style="left:1191px;top:9px" width="14" height="13"><rect x="0.6" y="0.6" width="12.8" height="11.8" fill="none" stroke="#fff" stroke-width="1.1"/><path d="M0.6 3.5H13.4" stroke="#fff" stroke-width="1.1"/><path d="M7 10V5.5M4.8 7.5L7 5.3L9.2 7.5" stroke="#fff" stroke-width="1.1" fill="none"/></svg>
<div class="a" style="left:1240px;top:15px;width:11px;height:1px;background:#fff"></div>
<svg style="left:1285px;top:9px" width="12" height="12"><rect x="0.5" y="2.5" width="9" height="9" fill="none" stroke="#fff"/><path d="M2.5 2.5V0.5H11.5V9.5H9.5" fill="none" stroke="#fff"/></svg>
<svg style="left:1331px;top:9px" width="12" height="12"><path d="M0.5 0.5L11.5 11.5M11.5 0.5L0.5 11.5" stroke="#fff" stroke-width="1.2"/></svg>
<svg style="left:659px;top:40px" width="13" height="18"><path d="M3.5 12Q3.5 9.5 2 8Q0.8 6.5 0.8 5Q0.8 0.8 6.5 0.8Q12.2 0.8 12.2 5Q12.2 6.5 11 8Q9.5 9.5 9.5 12Z" fill="none" stroke="#fff" stroke-width="1.2"/><path d="M4 14H9M4.5 16.5H8.5" stroke="#fff" stroke-width="1.2"/></svg>
<svg style="left:1328px;top:40px" width="17" height="15"><path d="M0.7 0.7H16.3V10.5H7L3.5 14V10.5H0.7Z" fill="none" stroke="#fff" stroke-width="1.2"/></svg>
<svg style="left:9px;top:163px" width="22" height="22"><circle cx="11" cy="11" r="10.8" fill="#3b7ac0"/><rect x="9.6" y="9" width="2.8" height="8.5" fill="#fff"/><circle cx="11" cy="5.8" r="1.6" fill="#fff"/></svg>
<div class="t" style="left:40.40px;top:168.63px;font-size:12.2px;color:#333;transform:scaleX(0.8956);">OBTENGA OFFICE AUTÉNTICO</div>
<div class="t" style="left:213.40px;top:161.38px;font-size:12.5px;color:#333;transform:scaleX(0.9397);">Su licencia no es original y puede ser víctima de una falsificación de software. Evite las interrupciones y mantenga sus archivos a salvo con una licencia</div>
<div class="t" style="left:213.40px;top:176.38px;font-size:12.5px;color:#333;transform:scaleX(0.9733);">original de Office hoy mismo.</div>
<div class="a" style="left:1025px;top:164px;width:168px;height:21px;background:#fff;border:1px solid #c8c8c8"></div>
<div class="t" style="left:1041.40px;top:168.38px;font-size:12.5px;color:#333;transform:scaleX(0.9645);">Obtenga Office auténtico</div>
<div class="a" style="left:1202px;top:164px;width:124px;height:21px;background:#fff;border:1px solid #c8c8c8"></div>
<div class="t" style="left:1216.91px;top:168.38px;font-size:12.5px;color:#333;transform:scaleX(0.9874);">Más información</div>
<svg style="left:1338px;top:168px" width="11" height="11"><path d="M0.5 0.5L10.5 10.5M10.5 0.5L0.5 10.5" stroke="#444" stroke-width="1.3"/></svg>
<div class="a" style="left:5px;top:201px;width:101px;height:25px;background:#fff;border:1px solid #d4d4d4"></div>
<div class="t" style="left:11.29px;top:208.63px;font-size:12.2px;color:#333;transform:scaleX(1.1074);">I14</div>
<svg style="left:92px;top:209px" width="9" height="5"><path d="M0 0H8.5L4.25 4.5Z" fill="#666"/></svg>
<svg style="left:121px;top:208px" width="3" height="13"><circle cx="1.5" cy="1.5" r="1" fill="#a8a8a8"/><circle cx="1.5" cy="6.5" r="1" fill="#a8a8a8"/><circle cx="1.5" cy="11.5" r="1" fill="#a8a8a8"/></svg>
<div class="a" style="left:137px;top:201px;width:110px;height:25px;background:#fff;border:1px solid #d4d4d4"></div>
<svg style="left:150px;top:208px" width="12" height="12"><path d="M1 1L11 11M11 1L1 11" stroke="#b5b5b5" stroke-width="1.3"/></svg>
<svg style="left:184px;top:208px" width="14" height="12"><path d="M1 6.5L5 10.5L13 1.5" stroke="#b5b5b5" stroke-width="1.6" fill="none"/></svg>
<div class="t" style="left:222.00px;top:208.95px;font-size:13px;color:#777;font-weight:bold;font-style:italic;font-family:"Liberation Serif";">f</div>
<div class="t" style="left:228.50px;top:213.35px;font-size:9px;color:#777;font-weight:bold;font-style:italic;font-family:"Liberation Serif";">x</div>
<div class="a" style="left:250px;top:201px;width:1105px;height:25px;background:#fff;border:1px solid #d4d4d4"></div>
<div class="t" style="left:261.01px;top:209.38px;font-size:12.5px;color:#222;transform:scaleX(0.9899);">POSO VELEZ JONATHAN PAUL</div>
<svg style="left:1338px;top:210px" width="10" height="7"><path d="M1 1L5 5L9 1" stroke="#444" stroke-width="1.4" fill="none"/></svg>
<svg style="left:26px;top:256px" width="535" height="142" viewBox="26 256 535 142">
<defs>
<pattern id="hatch" width="3" height="3" patternUnits="userSpaceOnUse" patternTransform="rotate(35)">
<rect width="3" height="3" fill="#6fa57c"/><rect width="0.9" height="3" fill="#e3efe5"/></pattern>
</defs>
<!-- left lines -->
<rect x="60" y="319" width="27" height="4" fill="#f4cd3c"/>
<rect x="50" y="337" width="37" height="4" fill="#1b5e2e"/>
<rect x="28" y="354" width="59" height="4" fill="#1d86b0"/>
<!-- right lines -->
<rect x="492" y="318.5" width="31.5" height="4" fill="#f4cd3c"/>
<rect x="492" y="336.5" width="44.5" height="4" fill="#1b5e2e"/>
<rect x="492" y="354" width="69" height="4" fill="#1d86b0"/>
<!-- laurel -->
<path d="M129.3 280.7 L114.7 289.6 Q104 302 103.2 314.6 Q104 328 111.5 336.5 Q120 344 132.4 347.9 L147 347 L141.75 339.6 Q133 335 130.3 331.3 Q124 324 124 316.7 Q124 308 126.1 301 Q129 292 134 284.4 Z" fill="url(#hatch)"/>
<path d="M195.5 280.7 L210.1 289.6 Q220.8 302 221.6 314.6 Q220.8 328 213.3 336.5 Q204.8 344 192.4 347.9 L177.8 347 L183.05 339.6 Q191.8 335 194.5 331.3 Q200.8 324 200.8 316.7 Q200.8 308 198.7 301 Q195.8 292 190.8 284.4 Z" fill="url(#hatch)"/>
<path d="M129 287 Q116 300 114 316 Q116 333 140 344" fill="none" stroke="#f4faf5" stroke-width="1.1"/>
<path d="M195.8 287 Q208.8 300 210.8 316 Q208.8 333 184.8 344" fill="none" stroke="#f4faf5" stroke-width="1.1"/>
<!-- shield -->
<path d="M135.5 298 L162.5 292 L189.5 299 L187.5 334 Q182 343 162.5 350.5 Q143 343 137 334 Z" fill="#2a88b8"/>
<path d="M140.5 301 L162.5 296.5 L184.5 301.5 L183 333 Q178 340 162.5 346 Q147 340 142 333 Z" fill="#fff"/>
<path d="M142 302 L162.5 298 L183 302.5 L181.5 332.5 Q177 339 162.5 344.5 Q148 339 143.5 332.5 Z" fill="#c0282d"/>
<circle cx="162" cy="302.5" r="4" fill="#f39c28"/>
<path d="M143 310 Q152 306 160 311 Q170 306 182 310 L182 318 L143 318 Z" fill="#2f8a3c"/>
<path d="M144 317 Q162 306 181 317" fill="none" stroke="#e8f0f0" stroke-width="1.3"/>
<rect x="143" y="316" width="39" height="4" fill="#3a86c8"/>
<rect x="143" y="320" width="39" height="1.3" fill="#fff"/>
<rect x="161.8" y="320" width="1.3" height="25" fill="#fff"/>
<path d="M149 326 L152.5 331 L156 326 L152.5 329 Z" fill="#dde"/>
<ellipse cx="170" cy="328" rx="2.6" ry="4" fill="#f0b030"/>
<ellipse cx="176" cy="330" rx="2" ry="3" fill="#f3c542"/>
<path d="M166 323 Q164 330 167 336" fill="none" stroke="#3a2a10" stroke-width="1" stroke-dasharray="1 0.8"/>
<!-- bison -->
<path d="M144.3 284 Q145 281 149 280 Q152 278 155 277.5 Q158 275 160.5 275 L162 278 L161.5 283 L160 288 L159.5 292.7 L158 292.7 L156.5 289.5 L151 289.5 L148 296.6 L146.5 296.6 L145.5 290 Q144 287 144.3 284 Z" fill="#7a3516"/>
<path d="M180.7 284 Q180 281 176 280 Q173 278 170 277.5 Q167 275 164.5 275 L163 278 L163.5 283 L165 288 L165.5 292.7 L167 292.7 L168.5 289.5 L174 289.5 L177 296.6 L178.5 296.6 L179.5 290 Q181 287 180.7 284 Z" fill="#7a3516"/>
<!-- banner -->
<path d="M111.4 358.2 Q125 352 160 350.5 Q195 351 208.2 357.7 L197.7 368 Q160 361 117.8 369.6 Z" fill="#fff" stroke="#8a8a8a" stroke-width="0.9"/>
<path d="M121 360.5 Q160 354 198 360" fill="none" stroke="#2a2a2a" stroke-width="1.5" stroke-dasharray="1.2 0.5"/>
<!-- scrolls -->
<path d="M82.7 361.8 Q83 359 86.8 359.1 Q90 359 93.2 360 L99.1 363.7 L111.4 359.1 L117.8 369.6 L123.3 370.5 Q124.5 372 123.7 373.2 L116.4 374.1 L103.7 378.7 Q101 379 99.1 377.8 L83.6 365 Q82 363 82.7 361.8 Z" fill="#1b6a2f" stroke="#0e3d1a" stroke-width="0.7"/>
<path d="M88 361 Q93 361 96 364.5 Q92 367 88.5 364" fill="none" stroke="#0e3d1a" stroke-width="0.7"/>
<path d="M207.3 360 L215.5 363.2 L221.9 365 L225.5 360.9 Q228 360 231 361.4 Q233 363 232.4 364.6 L229.2 368.7 L217.3 378.7 Q215 379.5 212.8 379.2 L197.3 373.2 Q196 372.5 196.8 371.4 L202.3 369.1 Z" fill="#f5c928" stroke="#8a6a10" stroke-width="0.7"/>
<path d="M225.5 361 Q229 364 226 367.5" fill="none" stroke="#8a6a10" stroke-width="0.7"/>
<!-- flowers / red ribbons -->
<path d="M132 380.5 Q142 373 150 367 L154 371 Q146 377 137 383 Z" fill="#c8252b"/>
<path d="M189 380.5 Q179 373 171 367 L167 371 Q175 377 184 383 Z" fill="#c8252b"/>
<path d="M131 380 Q137 376 144 378 L139 382.5 Q134 383 131 380Z M190 380 Q184 376 177 378 L182 382.5 Q187 383 190 380Z" fill="#f2c12e" stroke="#a07a10" stroke-width="0.4"/>
<path d="M149 368 L154 372 L160.5 366 L167 372 L172 368 L171 374 L150 374 Z" fill="#2e7d3a"/>
<circle cx="152" cy="368.5" r="2.2" fill="#f2c12e"/><circle cx="169" cy="368.5" r="2.2" fill="#f2c12e"/>
<path d="M151 386 L160.5 381 L170 386 L160.5 384 Z" fill="#c8252b"/>
<ellipse cx="165.70" cy="377.00" rx="2.8" ry="1.6" transform="rotate(0 165.70 377.00)" fill="#f6c51e" stroke="#b88a10" stroke-width="0.4"/><ellipse cx="165.00" cy="379.60" rx="2.8" ry="1.6" transform="rotate(30 165.00 379.60)" fill="#f6c51e" stroke="#b88a10" stroke-width="0.4"/><ellipse cx="163.10" cy="381.50" rx="2.8" ry="1.6" transform="rotate(60 163.10 381.50)" fill="#f6c51e" stroke="#b88a10" stroke-width="0.4"/><ellipse cx="160.50" cy="382.20" rx="2.8" ry="1.6" transform="rotate(90 160.50 382.20)" fill="#f6c51e" stroke="#b88a10" stroke-width="0.4"/><ellipse cx="157.90" cy="381.50" rx="2.8" ry="1.6" transform="rotate(120 157.90 381.50)" fill="#f6c51e" stroke="#b88a10" stroke-width="0.4"/><ellipse cx="156.00" cy="379.60" rx="2.8" ry="1.6" transform="rotate(150 156.00 379.60)" fill="#f6c51e" stroke="#b88a10" stroke-width="0.4"/><ellipse cx="155.30" cy="377.00" rx="2.8" ry="1.6" transform="rotate(180 155.30 377.00)" fill="#f6c51e" stroke="#b88a10" stroke-width="0.4"/><ellipse cx="156.00" cy="374.40" rx="2.8" ry="1.6" transform="rotate(210 156.00 374.40)" fill="#f6c51e" stroke="#b88a10" stroke-width="0.4"/><ellipse cx="157.90" cy="372.50" rx="2.8" ry="1.6" transform="rotate(240 157.90 372.50)" fill="#f6c51e" stroke="#b88a10" stroke-width="0.4"/><ellipse cx="160.50" cy="371.80" rx="2.8" ry="1.6" transform="rotate(270 160.50 371.80)" fill="#f6c51e" stroke="#b88a10" stroke-width="0.4"/><ellipse cx="163.10" cy="372.50" rx="2.8" ry="1.6" transform="rotate(300 163.10 372.50)" fill="#f6c51e" stroke="#b88a10" stroke-width="0.4"/><ellipse cx="165.00" cy="374.40" rx="2.8" ry="1.6" transform="rotate(330 165.00 374.40)" fill="#f6c51e" stroke="#b88a10" stroke-width="0.4"/>
<circle cx="160.5" cy="377" r="3.6" fill="#e9a915"/>
<!-- text -->
</svg>
<div class="t" style="left:233.30px;top:303.88px;font-size:22.5px;color:#1f7ba9;font-weight:bold;transform:scaleX(0.9628);-webkit-text-stroke:0.7px #1f7ba9;">GAD</div>
<div class="t" style="left:232.30px;top:324.17px;font-size:19.8px;color:#1f7ba9;font-weight:bold;-webkit-text-stroke:0.7px #1f7ba9;">PARROQUIAL</div>
<div class="t" style="left:234.40px;top:341.07px;font-size:30.5px;color:#f5c623;font-weight:bold;transform:scaleX(0.9849);-webkit-text-stroke:1px #f5c623;">VALLE</div>
<div class="t" style="left:335.06px;top:341.07px;font-size:30.5px;color:#1a5c2b;font-weight:bold;transform:scaleX(0.9711);-webkit-text-stroke:1px #1a5c2b;">HERMOSO</div>
<div class="t" style="left:588.50px;top:312.52px;font-size:13.5px;color:#000;font-weight:bold;letter-spacing:1.1px;transform:scaleX(0.8057);-webkit-text-stroke:0.3px #000;">REGISTRO DE FACTURAS DE COMPRA Y RETENCIONES A</div>
<div class="t" style="left:670.00px;top:327.52px;font-size:13.5px;color:#000;font-weight:bold;letter-spacing:1.1px;transform:scaleX(0.7958);-webkit-text-stroke:0.3px #000;">PROVEEDORES DE JUNIO 2024</div>
<div class="t" style="left:792.40px;top:403.46px;font-size:12.4px;color:#000;font-weight:bold;transform:scaleX(0.9725);-webkit-text-stroke:0.3px #000;">TOTAL 332</div>
<div class="t" style="left:907.00px;top:403.46px;font-size:12.4px;color:#000;font-weight:bold;transform:scaleX(0.9794);-webkit-text-stroke:0.3px #000;">#¡REF!</div>
<div class="t" style="left:991.00px;top:403.46px;font-size:12.4px;color:#000;font-weight:bold;transform:scaleX(0.9773);-webkit-text-stroke:0.3px #000;">343C</div>
<div class="t" style="left:1070.00px;top:403.46px;font-size:12.4px;color:#000;font-weight:bold;transform:scaleX(0.9773);-webkit-text-stroke:0.3px #000;">343B</div>
<div class="t" style="left:1138.00px;top:403.46px;font-size:12.4px;color:#000;font-weight:bold;transform:scaleX(0.9864);-webkit-text-stroke:0.3px #000;">332</div>
<div class="t" style="left:1186.60px;top:403.46px;font-size:12.4px;color:#000;font-weight:bold;-webkit-text-stroke:0.3px #000;">343</div>
<div class="t" style="left:1232.30px;top:403.46px;font-size:12.4px;color:#000;font-weight:bold;transform:scaleX(1.0683);-webkit-text-stroke:0.3px #000;">312A</div>
<div class="t" style="left:1289.60px;top:403.46px;font-size:12.4px;color:#000;font-weight:bold;transform:scaleX(1.0057);-webkit-text-stroke:0.3px #000;">312</div>
<div class="t" style="left:1333.00px;top:403.46px;font-size:12.4px;color:#000;font-weight:bold;-webkit-text-stroke:0.3px #000;">3</div>
<div class="t" style="left:985.00px;top:312.99px;font-size:10.6px;color:#000;font-weight:bold;transform:scaleX(1.0649);-webkit-text-stroke:0.3px #000;">Botellas</div>
<div class="t" style="left:972.40px;top:328.99px;font-size:10.6px;color:#000;font-weight:bold;transform:scaleX(1.0533);-webkit-text-stroke:0.3px #000;">plásticas 1%</div>
<div class="t" style="left:1053.13px;top:264.99px;font-size:10.6px;color:#000;font-weight:bold;transform:scaleX(1.0700);-webkit-text-stroke:0.3px #000;">Actividades</div>
<div class="t" style="left:1078.33px;top:280.99px;font-size:10.6px;color:#000;font-weight:bold;transform:scaleX(1.0700);-webkit-text-stroke:0.3px #000;">de</div>
<div class="t" style="left:1052.59px;top:296.99px;font-size:10.6px;color:#000;font-weight:bold;transform:scaleX(1.0700);-webkit-text-stroke:0.3px #000;">construcció</div>
<div class="t" style="left:1059.43px;top:312.99px;font-size:10.6px;color:#000;font-weight:bold;transform:scaleX(1.0700);-webkit-text-stroke:0.3px #000;">n de obra</div>
<div class="t" style="left:1060.08px;top:328.99px;font-size:10.6px;color:#000;font-weight:bold;transform:scaleX(1.0700);-webkit-text-stroke:0.3px #000;">materias,</div>
<div class="t" style="left:1060.06px;top:344.99px;font-size:10.6px;color:#000;font-weight:bold;transform:scaleX(1.0700);-webkit-text-stroke:0.3px #000;">inmueble</div>
<div class="t" style="left:1053.22px;top:360.99px;font-size:10.6px;color:#000;font-weight:bold;transform:scaleX(1.0700);-webkit-text-stroke:0.3px #000;">urbanizació</div>
<div class="t" style="left:1063.58px;top:377.99px;font-size:10.6px;color:#000;font-weight:bold;transform:scaleX(1.0700);-webkit-text-stroke:0.3px #000;">n 1,75%</div>
<div class="t" style="left:1127.12px;top:296.99px;font-size:10.6px;color:#000;font-weight:bold;transform:scaleX(1.0700);-webkit-text-stroke:0.3px #000;">Cuando</div>
<div class="t" style="left:1130.18px;top:312.99px;font-size:10.6px;color:#000;font-weight:bold;transform:scaleX(1.0700);-webkit-text-stroke:0.3px #000;">no hay</div>
<div class="t" style="left:1126.17px;top:328.99px;font-size:10.6px;color:#000;font-weight:bold;transform:scaleX(1.0700);-webkit-text-stroke:0.3px #000;">retenció</div>
<div class="t" style="left:1145.29px;top:344.99px;font-size:10.6px;color:#000;font-weight:bold;transform:scaleX(1.0700);-webkit-text-stroke:0.3px #000;">n</div>
<div class="t" style="left:1180.62px;top:272.99px;font-size:10.6px;color:#000;font-weight:bold;transform:scaleX(1.0700);-webkit-text-stroke:0.3px #000;">100 %</div>
<div class="t" style="left:1180.37px;top:288.99px;font-size:10.6px;color:#000;font-weight:bold;transform:scaleX(1.0700);-webkit-text-stroke:0.3px #000;">y 1%.-</div>
<div class="t" style="left:1179.90px;top:304.99px;font-size:10.6px;color:#000;font-weight:bold;transform:scaleX(1.0700);-webkit-text-stroke:0.3px #000;">Regim</div>
<div class="t" style="left:1190.64px;top:320.99px;font-size:10.6px;color:#000;font-weight:bold;transform:scaleX(1.0700);-webkit-text-stroke:0.3px #000;">en</div>
<div class="t" style="left:1181.28px;top:336.99px;font-size:10.6px;color:#000;font-weight:bold;transform:scaleX(1.0700);-webkit-text-stroke:0.3px #000;">micro</div>
<div class="t" style="left:1179.93px;top:352.99px;font-size:10.6px;color:#000;font-weight:bold;transform:scaleX(1.0700);-webkit-text-stroke:0.3px #000;">mpres</div>
<div class="t" style="left:1193.79px;top:368.99px;font-size:10.6px;color:#000;font-weight:bold;transform:scaleX(1.0700);-webkit-text-stroke:0.3px #000;">a</div>
<div class="t" style="left:1222.84px;top:280.99px;font-size:10.6px;color:#000;font-weight:bold;transform:scaleX(1.0700);-webkit-text-stroke:0.3px #000;">Producto</div>
<div class="t" style="left:1244.79px;top:296.99px;font-size:10.6px;color:#000;font-weight:bold;transform:scaleX(1.0700);-webkit-text-stroke:0.3px #000;">s</div>
<div class="t" style="left:1224.63px;top:312.99px;font-size:10.6px;color:#000;font-weight:bold;transform:scaleX(1.0700);-webkit-text-stroke:0.3px #000;">agricoila</div>
<div class="t" style="left:1239.53px;top:328.99px;font-size:10.6px;color:#000;font-weight:bold;transform:scaleX(1.0700);-webkit-text-stroke:0.3px #000;">s o</div>
<div class="t" style="left:1231.24px;top:344.99px;font-size:10.6px;color:#000;font-weight:bold;transform:scaleX(1.0700);-webkit-text-stroke:0.3px #000;">Pecua</div>
<div class="t" style="left:1234.77px;top:360.99px;font-size:10.6px;color:#000;font-weight:bold;transform:scaleX(1.0700);-webkit-text-stroke:0.3px #000;">s 1%</div>
<div class="t" style="left:1280.28px;top:280.99px;font-size:10.6px;color:#000;font-weight:bold;transform:scaleX(1.0700);-webkit-text-stroke:0.3px #000;">Transfe</div>
<div class="t" style="left:1283.74px;top:296.99px;font-size:10.6px;color:#000;font-weight:bold;transform:scaleX(1.0700);-webkit-text-stroke:0.3px #000;">rencia</div>
<div class="t" style="left:1293.83px;top:312.99px;font-size:10.6px;color:#000;font-weight:bold;transform:scaleX(1.0700);-webkit-text-stroke:0.3px #000;">de</div>
<div class="t" style="left:1282.49px;top:328.99px;font-size:10.6px;color:#000;font-weight:bold;transform:scaleX(1.0700);-webkit-text-stroke:0.3px #000;">bienes</div>
<div class="t" style="left:1285.10px;top:344.99px;font-size:10.6px;color:#000;font-weight:bold;transform:scaleX(1.0700);-webkit-text-stroke:0.3px #000;">mueb</div>
<div class="t" style="left:1279.39px;top:360.99px;font-size:10.6px;color:#000;font-weight:bold;transform:scaleX(1.0700);-webkit-text-stroke:0.3px #000;">s 1,75%</div>
<div class="t" style="left:1335.50px;top:280.99px;font-size:10.6px;color:#000;font-weight:bold;transform:scaleX(1.0700);-webkit-text-stroke:0.3px #000;">r</div>
<div class="t" style="left:1331.00px;top:312.99px;font-size:10.6px;color:#000;font-weight:bold;transform:scaleX(1.0700);-webkit-text-stroke:0.3px #000;">re</div>
<div class="t" style="left:1333.00px;top:328.99px;font-size:10.6px;color:#000;font-weight:bold;transform:scaleX(1.0700);-webkit-text-stroke:0.3px #000;">c</div>
<div class="t" style="left:1332.00px;top:360.99px;font-size:10.6px;color:#000;font-weight:bold;transform:scaleX(1.0700);-webkit-text-stroke:0.3px #000;">2</div>
<div class="a" style="left:544px;top:342px;width:17px;height:16px;background:#f0f0f0;border:1px solid #c3c3c3"><svg style="left:4px;top:5px" width="8" height="5"><path d="M0 0H8L4 4.5Z" fill="#6b6b6b"/></svg></div>
<div class="a" style="left:948px;top:342px;width:17px;height:16px;background:#f0f0f0;border:1px solid #c3c3c3"><svg style="left:4px;top:5px" width="8" height="5"><path d="M0 0H8L4 4.5Z" fill="#6b6b6b"/></svg></div>
<div class="a" style="left:1030px;top:342px;width:17px;height:16px;background:#f0f0f0;border:1px solid #c3c3c3"><svg style="left:4px;top:5px" width="8" height="5"><path d="M0 0H8L4 4.5Z" fill="#6b6b6b"/></svg></div>
<div class="a" style="left:1105px;top:342px;width:17px;height:16px;background:#f0f0f0;border:1px solid #c3c3c3"><svg style="left:4px;top:5px" width="8" height="5"><path d="M0 0H8L4 4.5Z" fill="#6b6b6b"/></svg></div>
<div class="a" style="left:1157px;top:342px;width:17px;height:16px;background:#f0f0f0;border:1px solid #c3c3c3"><svg style="left:4px;top:5px" width="8" height="5"><path d="M0 0H8L4 4.5Z" fill="#6b6b6b"/></svg></div>
<div class="a" style="left:1202px;top:342px;width:17px;height:16px;background:#f0f0f0;border:1px solid #c3c3c3"><svg style="left:4px;top:5px" width="8" height="5"><path d="M0 0H8L4 4.5Z" fill="#6b6b6b"/></svg></div>
<div class="a" style="left:1259px;top:342px;width:17px;height:16px;background:#f0f0f0;border:1px solid #c3c3c3"><svg style="left:4px;top:5px" width="8" height="5"><path d="M0 0H8L4 4.5Z" fill="#6b6b6b"/></svg></div>
<div class="a" style="left:1307px;top:342px;width:17px;height:16px;background:#f0f0f0;border:1px solid #c3c3c3"><svg style="left:4px;top:5px" width="8" height="5"><path d="M0 0H8L4 4.5Z" fill="#6b6b6b"/></svg></div>
<div class="t" style="left:29.70px;top:444.67px;font-size:9.8px;color:#000;font-weight:bold;letter-spacing:0.4px;transform:scaleX(1.1068);-webkit-text-stroke:0.35px #000;">Nº</div>
<div class="t" style="left:67.60px;top:444.67px;font-size:9.8px;color:#000;font-weight:bold;letter-spacing:0.4px;transform:scaleX(0.9527);-webkit-text-stroke:0.35px #000;">FECHA</div>
<div class="t" style="left:125.50px;top:444.67px;font-size:9.8px;color:#000;font-weight:bold;letter-spacing:0.4px;-webkit-text-stroke:0.35px #000;">Nº DE C OMPROBANTE</div>
<div class="t" style="left:276.60px;top:437.67px;font-size:9.8px;color:#000;font-weight:bold;letter-spacing:0.4px;transform:scaleX(1.0568);-webkit-text-stroke:0.35px #000;">Nº RUC</div>
<div class="t" style="left:263.60px;top:452.67px;font-size:9.8px;color:#000;font-weight:bold;letter-spacing:0.4px;transform:scaleX(0.9570);-webkit-text-stroke:0.35px #000;">PROVEEDOR</div>
<div class="t" style="left:367.20px;top:437.67px;font-size:9.8px;color:#000;font-weight:bold;letter-spacing:0.4px;transform:scaleX(1.0311);-webkit-text-stroke:0.35px #000;">TIPO</div>
<div class="t" style="left:351.20px;top:452.67px;font-size:9.8px;color:#000;font-weight:bold;letter-spacing:0.4px;transform:scaleX(0.9708);-webkit-text-stroke:0.35px #000;">COMPROB.</div>
<div class="t" style="left:448.10px;top:444.67px;font-size:9.8px;color:#000;font-weight:bold;letter-spacing:0.4px;transform:scaleX(0.9830);-webkit-text-stroke:0.35px #000;">AUTORIZACIÓN</div>
<div class="t" style="left:594.90px;top:444.67px;font-size:9.8px;color:#000;font-weight:bold;letter-spacing:0.4px;transform:scaleX(0.9509);-webkit-text-stroke:0.35px #000;">PROVEEDOR</div>
<div class="t" style="left:700.70px;top:444.67px;font-size:9.8px;color:#000;font-weight:bold;letter-spacing:0.4px;transform:scaleX(0.9556);-webkit-text-stroke:0.35px #000;">BASE 15%</div>
<div class="t" style="left:771.30px;top:444.67px;font-size:9.8px;color:#000;font-weight:bold;letter-spacing:0.4px;transform:scaleX(0.9425);-webkit-text-stroke:0.35px #000;">BASE 0%</div>
<div class="t" style="left:847.80px;top:444.67px;font-size:9.8px;color:#000;font-weight:bold;letter-spacing:0.4px;transform:scaleX(1.1697);-webkit-text-stroke:0.35px #000;">IVA</div>
<div class="t" style="left:897.50px;top:435.67px;font-size:9.8px;color:#000;font-weight:bold;letter-spacing:0.4px;transform:scaleX(0.9591);-webkit-text-stroke:0.35px #000;">SUBTO-TAL</div>
<div class="t" style="left:916.40px;top:468.67px;font-size:9.8px;color:#000;font-weight:bold;letter-spacing:0.4px;transform:scaleX(1.1358);-webkit-text-stroke:0.35px #000;">332</div>
<div class="t" style="left:990.40px;top:444.67px;font-size:9.8px;color:#000;font-weight:bold;letter-spacing:0.4px;transform:scaleX(0.9473);-webkit-text-stroke:0.35px #000;">TOTAL</div>
<div class="t" style="left:1079.46px;top:437.67px;font-size:9.8px;color:#000;font-weight:bold;-webkit-text-stroke:0.3px #000;">Nº</div>
<div class="t" style="left:1055.70px;top:452.67px;font-size:9.8px;color:#000;font-weight:bold;letter-spacing:0.4px;transform:scaleX(0.9750);-webkit-text-stroke:0.35px #000;">RETENCION</div>
<div class="t" style="left:1160.00px;top:435.67px;font-size:9.8px;color:#000;font-weight:bold;letter-spacing:0.4px;-webkit-text-stroke:0.35px #000;">RETENCION IVA</div>
<div class="t" style="left:1149.70px;top:468.67px;font-size:9.8px;color:#000;font-weight:bold;letter-spacing:0.4px;transform:scaleX(1.0533);-webkit-text-stroke:0.35px #000;">10%</div>
<div class="t" style="left:1194.00px;top:468.67px;font-size:9.8px;color:#000;font-weight:bold;letter-spacing:0.4px;transform:scaleX(1.0629);-webkit-text-stroke:0.35px #000;">70%</div>
<div class="t" style="left:1244.40px;top:468.67px;font-size:9.8px;color:#000;font-weight:bold;letter-spacing:0.4px;transform:scaleX(1.0736);-webkit-text-stroke:0.35px #000;">100%</div>
<div class="t" style="left:1290.70px;top:435.67px;font-size:9.8px;color:#000;font-weight:bold;transform:scaleX(1.0700);-webkit-text-stroke:0.3px #000;">RETENCIÓN</div>
<div class="t" style="left:1299.00px;top:468.67px;font-size:9.8px;color:#000;font-weight:bold;letter-spacing:0.4px;transform:scaleX(1.0091);-webkit-text-stroke:0.35px #000;">COD</div>
<div class="t" style="left:37.60px;top:501.67px;font-size:9.8px;color:#000;transform:scaleX(0.9500);">5</div>
<div class="t" style="left:68.04px;top:501.14px;font-size:11.6px;color:#000;transform:scaleX(1.1200);">6/6/2024</div>
<div class="t" style="left:124.70px;top:501.14px;font-size:11.6px;color:#000;transform:scaleX(1.0700);">001</div>
<div class="t" style="left:152.80px;top:501.14px;font-size:11.6px;color:#000;transform:scaleX(1.0700);">777</div>
<div class="t" style="left:180.80px;top:501.14px;font-size:11.6px;color:#000;transform:scaleX(1.0700);">226833669</div>
<div class="t" style="left:249.00px;top:501.14px;font-size:11.6px;color:#000;transform:scaleX(1.0700);">1768152560001</div>
<div class="t" style="left:347.40px;top:501.14px;font-size:11.6px;color:#000;transform:scaleX(0.8520);">FACT. ELEC.</div>
<div class="t" style="left:416.80px;top:485.82px;font-size:10.8px;color:#000;transform:scaleX(1.1620);">03062024011768152560</div>
<div class="t" style="left:416.80px;top:501.82px;font-size:10.8px;color:#000;transform:scaleX(1.1620);">00120017772268336690</div>
<div class="t" style="left:416.80px;top:517.82px;font-size:10.8px;color:#000;transform:scaleX(1.1620);">306202415</div>
<div class="t" style="left:564.60px;top:485.82px;font-size:10.8px;color:#000;transform:scaleX(0.9650);">CORPORACION</div>
<div class="t" style="left:564.60px;top:501.82px;font-size:10.8px;color:#000;transform:scaleX(0.9650);">NACIONAL DE</div>
<div class="t" style="left:564.60px;top:517.82px;font-size:10.8px;color:#000;transform:scaleX(0.9650);">TELECOMUNICACIONES</div>
<div class="t" style="left:714.61px;top:501.14px;font-size:11.6px;color:#000;transform:scaleX(1.0300);">6.20</div>
<div class="t" style="left:782.01px;top:501.14px;font-size:11.6px;color:#000;transform:scaleX(1.0300);">0.00</div>
<div class="t" style="left:845.61px;top:501.14px;font-size:11.6px;color:#000;transform:scaleX(1.0300);">0.93</div>
<div class="t" style="left:915.21px;top:501.14px;font-size:11.6px;color:#000;transform:scaleX(1.0300);">6.20</div>
<div class="t" style="left:995.41px;top:501.14px;font-size:11.6px;color:#000;transform:scaleX(1.0300);">7.13</div>
<div class="t" style="left:1236.61px;top:501.14px;font-size:11.6px;color:#000;transform:scaleX(1.0300);">0.93</div>
<div class="t" style="left:1291.27px;top:501.14px;font-size:11.6px;color:#000;transform:scaleX(1.0300);">332</div>
<div class="t" style="left:1053.66px;top:501.14px;font-size:11.6px;color:#000;transform:scaleX(1.0700);">000001454</div>
<div class="t" style="left:1332.50px;top:501.14px;font-size:11.6px;color:#000;transform:scaleX(1.0700);">0</div>
<div class="t" style="left:37.60px;top:549.67px;font-size:9.8px;color:#000;transform:scaleX(0.9500);">6</div>
<div class="t" style="left:61.78px;top:549.14px;font-size:11.6px;color:#000;transform:scaleX(1.1200);">11/6/2024</div>
<div class="t" style="left:124.70px;top:549.14px;font-size:11.6px;color:#000;transform:scaleX(1.0700);">002</div>
<div class="t" style="left:152.80px;top:549.14px;font-size:11.6px;color:#000;transform:scaleX(1.0700);">002</div>
<div class="t" style="left:180.80px;top:549.14px;font-size:11.6px;color:#000;transform:scaleX(1.0700);">000000243</div>
<div class="t" style="left:249.00px;top:549.14px;font-size:11.6px;color:#000;transform:scaleX(1.0700);">1715948129001</div>
<div class="t" style="left:347.40px;top:549.14px;font-size:11.6px;color:#000;transform:scaleX(0.8520);">FACT. ELEC.</div>
<div class="t" style="left:416.80px;top:533.82px;font-size:10.8px;color:#000;transform:scaleX(1.1620);">10062024011715948129</div>
<div class="t" style="left:416.80px;top:549.82px;font-size:10.8px;color:#000;transform:scaleX(1.1620);">00120020020000002430</div>
<div class="t" style="left:416.80px;top:565.82px;font-size:10.8px;color:#000;transform:scaleX(1.1620);">000024717</div>
<div class="t" style="left:564.60px;top:533.82px;font-size:10.8px;color:#000;transform:scaleX(0.9650);">LOMBEIDA GONZALEZ</div>
<div class="t" style="left:564.60px;top:549.82px;font-size:10.8px;color:#000;transform:scaleX(0.9650);">JENNY SILVANA</div>
<div class="t" style="left:714.61px;top:549.14px;font-size:11.6px;color:#000;transform:scaleX(1.0300);">4.87</div>
<div class="t" style="left:778.69px;top:549.14px;font-size:11.6px;color:#000;transform:scaleX(1.0300);">56.08</div>
<div class="t" style="left:845.61px;top:549.14px;font-size:11.6px;color:#000;transform:scaleX(1.0300);">0.73</div>
<div class="t" style="left:911.89px;top:549.14px;font-size:11.6px;color:#000;transform:scaleX(1.0300);">60.95</div>
<div class="t" style="left:992.09px;top:549.14px;font-size:11.6px;color:#000;transform:scaleX(1.0300);">61.68</div>
<div class="t" style="left:1236.61px;top:549.14px;font-size:11.6px;color:#000;transform:scaleX(1.0300);">0.73</div>
<div class="t" style="left:1291.27px;top:549.14px;font-size:11.6px;color:#000;transform:scaleX(1.0300);">312</div>
<div class="t" style="left:1054.19px;top:549.14px;font-size:11.6px;color:#000;transform:scaleX(1.0700);">000001456</div>
<div class="t" style="left:1332.50px;top:549.14px;font-size:11.6px;color:#000;transform:scaleX(1.0700);">1</div>
<div class="t" style="left:38.55px;top:597.67px;font-size:9.8px;color:#000;transform:scaleX(0.9500);">7</div>
<div class="t" style="left:60.81px;top:597.14px;font-size:11.6px;color:#000;transform:scaleX(1.1200);">12/6/2024</div>
<div class="t" style="left:124.70px;top:597.14px;font-size:11.6px;color:#000;transform:scaleX(1.0700);">001</div>
<div class="t" style="left:152.80px;top:597.14px;font-size:11.6px;color:#000;transform:scaleX(1.0700);">062</div>
<div class="t" style="left:180.80px;top:597.14px;font-size:11.6px;color:#000;transform:scaleX(1.0700);">000067386</div>
<div class="t" style="left:249.00px;top:597.14px;font-size:11.6px;color:#000;transform:scaleX(1.0700);">1760002600001</div>
<div class="t" style="left:347.40px;top:597.14px;font-size:11.6px;color:#000;transform:scaleX(0.8520);">FACT. ELEC.</div>
<div class="t" style="left:416.80px;top:581.82px;font-size:10.8px;color:#000;transform:scaleX(1.1620);">12062024011760002600</div>
<div class="t" style="left:416.80px;top:597.82px;font-size:10.8px;color:#000;transform:scaleX(1.1620);">00120010620000673861</div>
<div class="t" style="left:416.80px;top:613.82px;font-size:10.8px;color:#000;transform:scaleX(1.1620);">234567814</div>
<div class="t" style="left:564.60px;top:581.82px;font-size:10.8px;color:#000;transform:scaleX(0.9650);">BANCO CENTRAL DEL</div>
<div class="t" style="left:564.60px;top:597.82px;font-size:10.8px;color:#000;transform:scaleX(0.9650);">ECUADOR</div>
<div class="t" style="left:714.61px;top:597.14px;font-size:11.6px;color:#000;transform:scaleX(1.0300);">0.00</div>
<div class="t" style="left:782.01px;top:597.14px;font-size:11.6px;color:#000;transform:scaleX(1.0300);">0.15</div>
<div class="t" style="left:845.61px;top:597.14px;font-size:11.6px;color:#000;transform:scaleX(1.0300);">0.00</div>
<div class="t" style="left:915.21px;top:597.14px;font-size:11.6px;color:#000;transform:scaleX(1.0300);">0.15</div>
<div class="t" style="left:995.41px;top:597.14px;font-size:11.6px;color:#000;transform:scaleX(1.0300);">0.15</div>
<div class="t" style="left:1236.61px;top:597.14px;font-size:11.6px;color:#000;transform:scaleX(1.0300);">0.00</div>
<div class="t" style="left:1291.27px;top:597.14px;font-size:11.6px;color:#000;transform:scaleX(1.0300);">332</div>
<div class="t" style="left:1063.65px;top:597.14px;font-size:11.6px;color:#000;transform:scaleX(0.9000);">SIN RET.</div>
<div class="t" style="left:1332.50px;top:597.14px;font-size:11.6px;color:#000;transform:scaleX(1.0700);">0</div>
<div class="t" style="left:37.60px;top:645.67px;font-size:9.8px;color:#000;transform:scaleX(0.9500);">8</div>
<div class="t" style="left:60.81px;top:645.14px;font-size:11.6px;color:#000;transform:scaleX(1.1200);">13/6/2024</div>
<div class="t" style="left:124.70px;top:645.14px;font-size:11.6px;color:#000;transform:scaleX(1.0700);">002</div>
<div class="t" style="left:152.80px;top:645.14px;font-size:11.6px;color:#000;transform:scaleX(1.0700);">001</div>
<div class="t" style="left:180.80px;top:645.14px;font-size:11.6px;color:#000;transform:scaleX(1.0700);">000000066</div>
<div class="t" style="left:249.00px;top:645.14px;font-size:11.6px;color:#000;transform:scaleX(1.0700);">1723101760001</div>
<div class="t" style="left:347.40px;top:645.14px;font-size:11.6px;color:#000;transform:scaleX(0.8520);">FACT. ELEC.</div>
<div class="t" style="left:416.80px;top:629.82px;font-size:10.8px;color:#000;transform:scaleX(1.1620);">13062024011723101760</div>
<div class="t" style="left:416.80px;top:645.82px;font-size:10.8px;color:#000;transform:scaleX(1.1620);">00120020010000000664</div>
<div class="t" style="left:416.80px;top:661.82px;font-size:10.8px;color:#000;transform:scaleX(1.1620);">355121310</div>
<div class="t" style="left:564.60px;top:629.82px;font-size:10.8px;color:#000;transform:scaleX(0.9650);">POSO VELEZ JONATHAN</div>
<div class="t" style="left:564.60px;top:645.82px;font-size:10.8px;color:#000;transform:scaleX(0.9650);">PAUL</div>
<div class="t" style="left:714.61px;top:645.14px;font-size:11.6px;color:#000;transform:scaleX(1.0300);">0.00</div>
<div class="t" style="left:775.37px;top:645.14px;font-size:11.6px;color:#000;transform:scaleX(1.0300);">161.77</div>
<div class="t" style="left:845.61px;top:645.14px;font-size:11.6px;color:#000;transform:scaleX(1.0300);">0.00</div>
<div class="t" style="left:908.57px;top:645.14px;font-size:11.6px;color:#000;transform:scaleX(1.0300);">161.77</div>
<div class="t" style="left:988.77px;top:645.14px;font-size:11.6px;color:#000;transform:scaleX(1.0300);">161.77</div>
<div class="t" style="left:1236.61px;top:645.14px;font-size:11.6px;color:#000;transform:scaleX(1.0300);">0.00</div>
<div class="t" style="left:1291.27px;top:645.14px;font-size:11.6px;color:#000;transform:scaleX(1.0300);">332</div>
<div class="t" style="left:1054.19px;top:645.14px;font-size:11.6px;color:#000;transform:scaleX(1.0700);">000001457</div>
<div class="t" style="left:1332.50px;top:645.14px;font-size:11.6px;color:#000;transform:scaleX(1.0700);">0</div>
<svg style="left:888px;top:399px" width="6" height="6"><path d="M0 0H6L0 6Z" fill="#138a36"/></svg>
<svg style="left:122px;top:483px" width="6" height="6"><path d="M0 0H6L0 6Z" fill="#138a36"/></svg>
<svg style="left:150px;top:483px" width="6" height="6"><path d="M0 0H6L0 6Z" fill="#138a36"/></svg>
<svg style="left:178px;top:483px" width="6" height="6"><path d="M0 0H6L0 6Z" fill="#138a36"/></svg>
<svg style="left:247px;top:483px" width="6" height="6"><path d="M0 0H6L0 6Z" fill="#138a36"/></svg>
<svg style="left:414px;top:483px" width="6" height="6"><path d="M0 0H6L0 6Z" fill="#138a36"/></svg>
<svg style="left:1048px;top:483px" width="6" height="6"><path d="M0 0H6L0 6Z" fill="#138a36"/></svg>
<svg style="left:122px;top:531px" width="6" height="6"><path d="M0 0H6L0 6Z" fill="#138a36"/></svg>
<svg style="left:150px;top:531px" width="6" height="6"><path d="M0 0H6L0 6Z" fill="#138a36"/></svg>
<svg style="left:178px;top:531px" width="6" height="6"><path d="M0 0H6L0 6Z" fill="#138a36"/></svg>
<svg style="left:247px;top:531px" width="6" height="6"><path d="M0 0H6L0 6Z" fill="#138a36"/></svg>
<svg style="left:414px;top:531px" width="6" height="6"><path d="M0 0H6L0 6Z" fill="#138a36"/></svg>
<svg style="left:1048px;top:531px" width="6" height="6"><path d="M0 0H6L0 6Z" fill="#138a36"/></svg>
<svg style="left:122px;top:579px" width="6" height="6"><path d="M0 0H6L0 6Z" fill="#138a36"/></svg>
<svg style="left:150px;top:579px" width="6" height="6"><path d="M0 0H6L0 6Z" fill="#138a36"/></svg>
<svg style="left:178px;top:579px" width="6" height="6"><path d="M0 0H6L0 6Z" fill="#138a36"/></svg>
<svg style="left:247px;top:579px" width="6" height="6"><path d="M0 0H6L0 6Z" fill="#138a36"/></svg>
<svg style="left:414px;top:579px" width="6" height="6"><path d="M0 0H6L0 6Z" fill="#138a36"/></svg>
<svg style="left:122px;top:627px" width="6" height="6"><path d="M0 0H6L0 6Z" fill="#138a36"/></svg>
<svg style="left:150px;top:627px" width="6" height="6"><path d="M0 0H6L0 6Z" fill="#138a36"/></svg>
<svg style="left:178px;top:627px" width="6" height="6"><path d="M0 0H6L0 6Z" fill="#138a36"/></svg>
<svg style="left:247px;top:627px" width="6" height="6"><path d="M0 0H6L0 6Z" fill="#138a36"/></svg>
<svg style="left:414px;top:627px" width="6" height="6"><path d="M0 0H6L0 6Z" fill="#138a36"/></svg>
<svg style="left:1048px;top:627px" width="6" height="6"><path d="M0 0H6L0 6Z" fill="#138a36"/></svg>
<div class="a" style="left:122px;top:675px;width:4px;height:3px;overflow:hidden"><svg style="left:0;top:0" width="6" height="6"><path d="M0 0H6L0 6Z" fill="#138a36"/></svg></div>
<div class="a" style="left:150px;top:675px;width:4px;height:3px;overflow:hidden"><svg style="left:0;top:0" width="6" height="6"><path d="M0 0H6L0 6Z" fill="#138a36"/></svg></div>
<div class="a" style="left:178px;top:675px;width:4px;height:3px;overflow:hidden"><svg style="left:0;top:0" width="6" height="6"><path d="M0 0H6L0 6Z" fill="#138a36"/></svg></div>
<div class="a" style="left:247px;top:675px;width:4px;height:3px;overflow:hidden"><svg style="left:0;top:0" width="6" height="6"><path d="M0 0H6L0 6Z" fill="#138a36"/></svg></div>
<div class="a" style="left:414px;top:675px;width:4px;height:3px;overflow:hidden"><svg style="left:0;top:0" width="6" height="6"><path d="M0 0H6L0 6Z" fill="#138a36"/></svg></div>
<div class="a" style="left:560px;top:625px;width:133px;height:51px;border:2px solid #1e6b41"></div>
<div class="a" style="left:690px;top:672px;width:5px;height:5px;background:#1e6b41;border:1px solid #fff"></div>
<div class="a" style="left:1338px;top:256px;width:1px;height:422px;background:#c6c6c6"></div>
<div class="a" style="left:1339px;top:237px;width:21px;height:441px;background:#e9e9e9"></div>
<div class="a" style="left:1357px;top:237px;width:3px;height:441px;background:#e2e2e2"></div>
<div class="a" style="left:1342px;top:239px;width:15px;height:15px;background:#fff;border:1px solid #a0a0a0"><svg style="left:3px;top:5px" width="8" height="5"><path d="M0 4.5H7.5L3.75 0Z" fill="#222"/></svg></div>
<div class="a" style="left:1342px;top:309px;width:15px;height:109px;background:#fff;border:1px solid #a0a0a0"></div>
<div class="a" style="left:1342px;top:663px;width:15px;height:15px;background:#fff;border:1px solid #a0a0a0"><svg style="left:3px;top:5px" width="8" height="5"><path d="M0 0H7.5L3.75 4.5Z" fill="#222"/></svg></div>
<div class="a" style="left:0px;top:678px;width:1360px;height:28px;background:#e6e6e6"></div>
<div class="a" style="left:0px;top:678px;width:1339px;height:1px;background:#c6c6c6"></div>
<svg style="left:25px;top:687px" width="6" height="9"><path d="M5 0V8L0 4Z" fill="#1e6b41"/></svg>
<svg style="left:55px;top:687px" width="6" height="9"><path d="M0 0V8L5 4Z" fill="#b9b9b9"/></svg>
<div class="t" style="left:81.00px;top:684.80px;font-size:12px;color:#1e6b41;font-weight:bold;transform:scaleX(1.0343);">...</div>
<div class="a" style="left:100px;top:683px;width:1px;height:19px;background:#c6c6c6"></div>
<div class="a" style="left:203px;top:683px;width:1px;height:19px;background:#c6c6c6"></div>
<div class="a" style="left:295px;top:683px;width:1px;height:19px;background:#c6c6c6"></div>
<div class="a" style="left:390px;top:683px;width:1px;height:19px;background:#c6c6c6"></div>
<div class="a" style="left:576px;top:683px;width:1px;height:19px;background:#c6c6c6"></div>
<div class="a" style="left:390px;top:678px;width:96px;height:24px;background:#fff"></div>
<div class="a" style="left:390px;top:700px;width:96px;height:2px;background:#1e6b41"></div>
<div class="t" style="left:111.97px;top:685.63px;font-size:12.2px;color:#444;transform:scaleX(1.0308);">MARZO 2024</div>
<div class="t" style="left:217.00px;top:685.63px;font-size:12.2px;color:#444;transform:scaleX(0.9554);">ABRIL 2024</div>
<div class="t" style="left:307.46px;top:685.63px;font-size:12.2px;color:#444;transform:scaleX(1.0432);">MAYO 2024</div>
<div class="t" style="left:402.50px;top:685.63px;font-size:12.2px;color:#1e6b41;font-weight:bold;transform:scaleX(1.0299);">JUNIO 2024</div>
<div class="t" style="left:499.00px;top:685.63px;font-size:12.2px;color:#444;transform:scaleX(0.9577);">JULIO 2024</div>
<svg style="left:610px;top:683px" width="17" height="17"><circle cx="8.5" cy="8.5" r="7" fill="none" stroke="#7a7a7a" stroke-width="1.3"/><path d="M8.5 4.5V12.5M4.5 8.5H12.5" stroke="#7a7a7a" stroke-width="1.3"/></svg>
<svg style="left:729px;top:684px" width="3" height="14"><circle cx="1.5" cy="2" r="1" fill="#b0b0b0"/><circle cx="1.5" cy="6.5" r="1" fill="#b0b0b0"/><circle cx="1.5" cy="11" r="1" fill="#b0b0b0"/></svg>
<div class="a" style="left:746px;top:685px;width:15px;height:15px;background:#fff;border:1px solid #a0a0a0"><svg style="left:5px;top:3px" width="5" height="8"><path d="M4.5 0V7.5L0 3.75Z" fill="#222"/></svg></div>
<div class="a" style="left:761px;top:685px;width:373px;height:15px;background:#fff;border:1px solid #a0a0a0"></div>
<div class="a" style="left:1321px;top:685px;width:15px;height:15px;background:#fff;border:1px solid #a0a0a0"><svg style="left:5px;top:3px" width="5" height="8"><path d="M0 0V7.5L4.5 3.75Z" fill="#222"/></svg></div>
<div class="a" style="left:0px;top:706px;width:1360px;height:22px;background:#f3f3f3"></div>
<div class="a" style="left:0px;top:706px;width:1360px;height:1px;background:#d6d6d6"></div>
<div class="t" style="left:12.00px;top:712.23px;font-size:11.5px;color:#333;transform:scaleX(0.9625);">Listo</div>
<svg style="left:80px;top:709px" width="18" height="16"><path d="M8 2.5A5.5 5.5 0 1 0 13 9" fill="none" stroke="#555" stroke-width="1.4"/><path d="M8 1V5M9 8L16 15M16 8L9 15" stroke="#555" stroke-width="1.6"/></svg>
<div class="t" style="left:100.00px;top:712.23px;font-size:11.5px;color:#222;font-weight:bold;transform:scaleX(0.9095);">Accesibilidad: es necesario investigar</div>
<div class="a" style="left:1066px;top:707px;width:40px;height:21px;background:#d6d6d6"></div>
<svg style="left:1078px;top:710px" width="14" height="13"><rect x="0.5" y="0.5" width="13" height="12" fill="#7a7a7a"/><path d="M4.5 1V12M9.5 1V12M1 4.5H13M1 8.5H13" stroke="#d6d6d6" stroke-width="1"/></svg>
<svg style="left:1119px;top:710px" width="14" height="13"><rect x="0.5" y="0.5" width="13" height="12" fill="none" stroke="#666"/><rect x="3.5" y="2.5" width="7" height="8" fill="none" stroke="#666"/><path d="M5 4.5H9M5 6.5H9M5 8.5H9" stroke="#888"/></svg>
<svg style="left:1159px;top:710px" width="14" height="13"><rect x="0.5" y="0.5" width="13" height="12" fill="none" stroke="#666"/><path d="M4.5 0.5V8.5H13.5" fill="none" stroke="#666"/></svg>
<div class="a" style="left:1192px;top:716px;width:8px;height:1px;background:#444"></div>
<div class="a" style="left:1205px;top:716px;width:100px;height:2px;background:#555"></div>
<div class="a" style="left:1250px;top:712px;width:6px;height:11px;background:#444"></div>
<div class="a" style="left:1310px;top:716px;width:8px;height:1px;background:#444"></div>
<div class="a" style="left:1313px;top:712px;width:1px;height:9px;background:#444"></div>
<div class="t" style="left:1330.00px;top:712.23px;font-size:11.5px;color:#333;transform:scaleX(0.9872);">95%</div>
<div class="a" style="left:0px;top:728px;width:1360px;height:40px;background:#111"></div>
<svg style="left:16px;top:740px" width="17" height="17"><path d="M0 2.3L7 1.3V8H0ZM8 1.1L16.5 0V8H8ZM0 9H7V15.7L0 14.7ZM8 9H16.5V17L8 15.9Z" fill="#fff"/></svg>
<div class="a" style="left:48px;top:728px;width:344px;height:40px;background:#f2f2f2"></div>
<svg style="left:59px;top:739px" width="18" height="18"><circle cx="10.5" cy="7" r="5.5" fill="none" stroke="#222" stroke-width="1.4"/><path d="M6.5 11L1 16.5" stroke="#222" stroke-width="1.6"/></svg>
<div class="t" style="left:86.46px;top:742.10px;font-size:14px;color:#222;transform:scaleX(1.0389);">Escribe aquí para buscar</div>
<svg style="left:320px;top:728px" width="72" height="40" viewBox="320 728 72 40">
<defs>
<radialGradient id="shb" cx="0.35" cy="0.3" r="0.8"><stop offset="0" stop-color="#f6efc4"/><stop offset="0.45" stop-color="#d9d6d8"/><stop offset="1" stop-color="#6e6c94"/></radialGradient>
<linearGradient id="grs" x1="0" y1="0" x2="0" y2="1"><stop offset="0" stop-color="#a8d84a"/><stop offset="1" stop-color="#3f9a2a"/></linearGradient>
</defs>
<path d="M320 761 Q332 757 345 758 L352 756 Q372 752 384 755 L391 768 L320 768Z" fill="url(#grs)"/>
<path d="M321 760 l2 -4 l1.5 3 l2 -5 l2 4 l2 -5 l2 5 l2 -3 l2 3 M370 756 l2 -4 l1.5 3 l2 -4 l2 3 l2 -5 l2 5 l2 -2" fill="#8cc43a" stroke="#8cc43a" stroke-width="1"/>
<path d="M320 768 Q340 758 360 761 Q380 763 391 768Z" fill="#5fb32e"/>
<path d="M342.7 755 V765 M348.5 756 V766 M362 755 V764 M368.5 755 V764" stroke="#8a8494" stroke-width="2.6"/>
<rect x="339" y="737" width="36" height="20.5" rx="8" fill="url(#shb)"/>
<ellipse cx="339.8" cy="739.8" rx="5" ry="6.8" fill="#6c6c7e"/>
<ellipse cx="339.5" cy="742.5" rx="2.5" ry="3" fill="#9a96a0"/>
<ellipse cx="333.5" cy="734" rx="2.8" ry="1.8" transform="rotate(30 333.5 734)" fill="#6c6c7e"/>
<ellipse cx="347" cy="734" rx="2.8" ry="1.8" transform="rotate(-30 347 734)" fill="#6c6c7e"/>
</svg>
<svg style="left:406px;top:735px" width="26" height="26" viewBox="0 0 26 26">
<defs><linearGradient id="eg" x1="0" y1="0" x2="1" y2="1"><stop offset="0" stop-color="#35c1f1"/><stop offset="0.6" stop-color="#3bb58c"/><stop offset="1" stop-color="#7ad352"/></linearGradient></defs>
<circle cx="13" cy="13" r="12.5" fill="url(#eg)"/>
<path d="M1 15 Q2 6 12 5 Q22 5 24 13 Q21 10 16 11 Q10 12 11 17 Q12 22 19 23 Q14 26 9 25 Q2 22 1 15Z" fill="#1f6bd6"/>
<ellipse cx="15" cy="16" rx="4" ry="3.2" fill="#111"/>
</svg>
<svg style="left:456px;top:739px" width="23" height="18" viewBox="0 0 23 18">
<path d="M0 1.5 Q0 0 1.5 0 H8 L10 2 H21.5 Q23 2 23 3.5 V16.5 Q23 18 21.5 18 H1.5 Q0 18 0 16.5Z" fill="#f8c74a"/>
<rect x="0" y="4" width="23" height="14" rx="1" fill="#fcd45f"/>
<path d="M5 18 V11 H18 V18 H15 V14 H8 V18Z" fill="#3f94d6"/>
</svg>
<div class="a" style="left:493px;top:728px;width:44px;height:40px;background:#2b2b2b"></div>
<svg style="left:504px;top:737px" width="25" height="22" viewBox="0 0 25 22">
<rect x="6" y="0" width="19" height="22" rx="1.5" fill="#21a366"/>
<rect x="15" y="0" width="10" height="7.3" fill="#33c481"/>
<rect x="6" y="7.3" width="19" height="7.4" fill="#107c41"/>
<rect x="15" y="14.7" width="10" height="7.3" fill="#185c37"/>
<rect x="0" y="5" width="12" height="12" rx="1" fill="#107c41"/>
<path d="M3 8 L9 14 M9 8 L3 14" stroke="#fff" stroke-width="1.8"/>
</svg>
<svg style="left:554px;top:735px" width="24" height="24" viewBox="0 0 24 24">
<defs><radialGradient id="ff" cx="0.6" cy="0.3" r="0.8"><stop offset="0" stop-color="#ffe226"/><stop offset="0.5" stop-color="#ff7139"/><stop offset="1" stop-color="#e31587"/></radialGradient></defs>
<path d="M12 23 A10.5 10.5 0 0 1 2 9 Q3 6 5 5 Q5 8 7 9 Q9 3 15 1 Q14 4 17 6 Q22 9 22.5 13 A10.5 10.5 0 0 1 12 23Z" fill="url(#ff)"/>
<circle cx="11" cy="13" r="5" fill="#7542e5"/>
<circle cx="12" cy="11.5" r="2.5" fill="#b833e1"/>
</svg>
<svg style="left:603px;top:736px" width="24" height="24" viewBox="-12 -12 24 24">
<path d="M0 0 L-10.39 -6 A12 12 0 0 1 10.39 -6Z" fill="#db4437"/>
<path d="M0 0 L10.39 -6 A12 12 0 0 1 0 12Z" fill="#fcc934"/>
<path d="M0 0 L0 12 A12 12 0 0 1 -10.39 -6Z" fill="#1e8e3e"/>
<circle r="5.6" fill="#fff"/><circle r="4.4" fill="#1a73e8"/></svg>
<svg style="left:651px;top:737px" width="26" height="22" viewBox="0 0 26 22">
<rect x="6" y="0" width="20" height="22" rx="1.5" fill="#2b7cd3"/>
<rect x="6" y="0" width="20" height="5.5" fill="#41a5ee"/>
<rect x="6" y="11" width="20" height="5.5" fill="#185abd"/>
<rect x="6" y="16.5" width="20" height="5.5" fill="#103f91"/>
<rect x="0" y="5" width="12.5" height="12" rx="1" fill="#185abd"/>
<path d="M2 8 L3.8 14 L6.2 9 L8.6 14 L10.4 8" stroke="#fff" stroke-width="1.5" fill="none"/>
</svg>
<svg style="left:701px;top:736px" width="24" height="24" viewBox="0 0 24 24">
<circle cx="12" cy="12" r="11.5" fill="#1ed760"/>
<path d="M5 8.5 Q12 6 19 9.5 M6 12.3 Q12 10.5 17.5 13 M7 15.8 Q12 14.5 16 16.5" stroke="#111" stroke-width="2" fill="none" stroke-linecap="round"/>
</svg>
<svg style="left:750px;top:736px" width="24" height="24" viewBox="-12 -12 24 24">
<path d="M0 0 L-10.39 -6 A12 12 0 0 1 10.39 -6Z" fill="#db4437"/>
<path d="M0 0 L10.39 -6 A12 12 0 0 1 0 12Z" fill="#fcc934"/>
<path d="M0 0 L0 12 A12 12 0 0 1 -10.39 -6Z" fill="#1e8e3e"/>
<circle r="5.6" fill="#fff"/><circle r="4.4" fill="#1a73e8"/></svg>
<svg style="left:760px;top:746px" width="17" height="17"><circle cx="8.5" cy="8.5" r="8" fill="#d8dde6"/><path d="M4 15 Q8.5 11 13 15 A8 8 0 0 1 4 15Z" fill="#54c6b8"/><path d="M7 5 L8.5 12 L10 5" stroke="#7b6a4e" stroke-width="2" fill="none"/></svg>
<svg style="left:800px;top:737px" width="22" height="21" viewBox="0 0 22 21">
<rect width="22" height="21" rx="3" fill="#b30b00"/>
<path d="M11 4 Q9 4 10 9 Q11 12 13 14 Q16 15.5 17 14.5 Q17 13 13 13.5 Q9 14 6 16 Q4.5 17.5 5.5 17.5 Q7 17 9 13 Q11 8 11.5 6 Q12 4 11 4Z" fill="none" stroke="#fff" stroke-width="1.4"/>
</svg>
<svg style="left:847px;top:736px" width="26" height="24" viewBox="0 0 26 24">
<path d="M12 4 Q22 3 22 11 Q22 18 13 19 Q3 20 1.5 14 Q0 9 5 6 Q8 4 12 4Z" fill="#bfe0f5"/>
<circle cx="5" cy="12" r="2.2" fill="#e9574a"/><circle cx="8" cy="8" r="2" fill="#5cbf4b"/><circle cx="12.5" cy="7" r="2" fill="#f6b933"/><circle cx="9.8" cy="13.5" r="1.5" fill="#1b1b1b"/>
<path d="M24 1 L12 23" stroke="#d39a4a" stroke-width="2.2"/>
<path d="M22 0 L26 3 L23 6 Z" fill="#e8c08a"/>
</svg>
<div class="a" style="left:448px;top:766px;width:40px;height:2px;background:#76b9ed"></div>
<div class="a" style="left:493px;top:766px;width:44px;height:2px;background:#76b9ed"></div>
<div class="a" style="left:546px;top:766px;width:40px;height:2px;background:#76b9ed"></div>
<div class="a" style="left:693px;top:766px;width:40px;height:2px;background:#76b9ed"></div>
<div class="a" style="left:742px;top:766px;width:40px;height:2px;background:#76b9ed"></div>
<div class="a" style="left:791px;top:766px;width:40px;height:2px;background:#76b9ed"></div>
<div class="a" style="left:840px;top:766px;width:40px;height:2px;background:#76b9ed"></div>
<svg style="left:1116px;top:743px" width="14" height="9"><path d="M1 8L7 2L13 8" stroke="#fff" stroke-width="1.3" fill="none"/></svg>
<svg style="left:1141px;top:739px" width="14" height="18"><path d="M2.5 3 Q4 1 7 1 Q10 1 11 3 M2.5 15 Q4 17 7 17 Q10 17 11 15" stroke="#ddd" stroke-width="1.1" fill="none"/><rect x="1" y="5" width="8" height="8" rx="2" fill="none" stroke="#fff" stroke-width="1.2"/><path d="M9.5 7.5 L13 5.5V12.5L9.5 10.5" stroke="#fff" stroke-width="1.1" fill="none"/></svg>
<svg style="left:1163px;top:741px" width="17" height="15"><rect x="3.5" y="1.5" width="12.5" height="8.5" fill="none" stroke="#fff" stroke-width="1.2"/><path d="M9.75 10V13.5M6 13.8H13.5M0.6 1V14" stroke="#fff" stroke-width="1.2"/><rect x="0.6" y="2" width="5" height="4" fill="#111" stroke="#fff" stroke-width="1"/></svg>
<svg style="left:1187px;top:741px" width="17" height="15"><path d="M1 5H4L8 1.5V13.5L4 10H1Z" fill="none" stroke="#fff" stroke-width="1.2"/><path d="M10.5 5Q12 7.5 10.5 10M12.8 3.2Q15.5 7.5 12.8 11.8M15 1.5Q18.5 7.5 15 13.5" stroke="#fff" stroke-width="1.1" fill="none"/></svg>
<div class="t" style="left:1215.70px;top:741.80px;font-size:12px;color:#fff;transform:scaleX(0.7331);">ESP</div>
<div class="t" style="left:1262.10px;top:732.80px;font-size:12px;color:#fff;transform:scaleX(0.8631);">16:39</div>
<div class="t" style="left:1249.00px;top:749.80px;font-size:12px;color:#fff;transform:scaleX(0.9700);">24/7/2024</div>
<svg style="left:1319px;top:740px" width="17" height="17"><path d="M0.7 0.7H16.3V11.5H10.5L8.5 14.5L6.5 11.5H0.7Z" fill="none" stroke="#fff" stroke-width="1.3"/></svg>
<div class="a" style="left:1355px;top:728px;width:1px;height:40px;background:#555"></div>
</body></html>
